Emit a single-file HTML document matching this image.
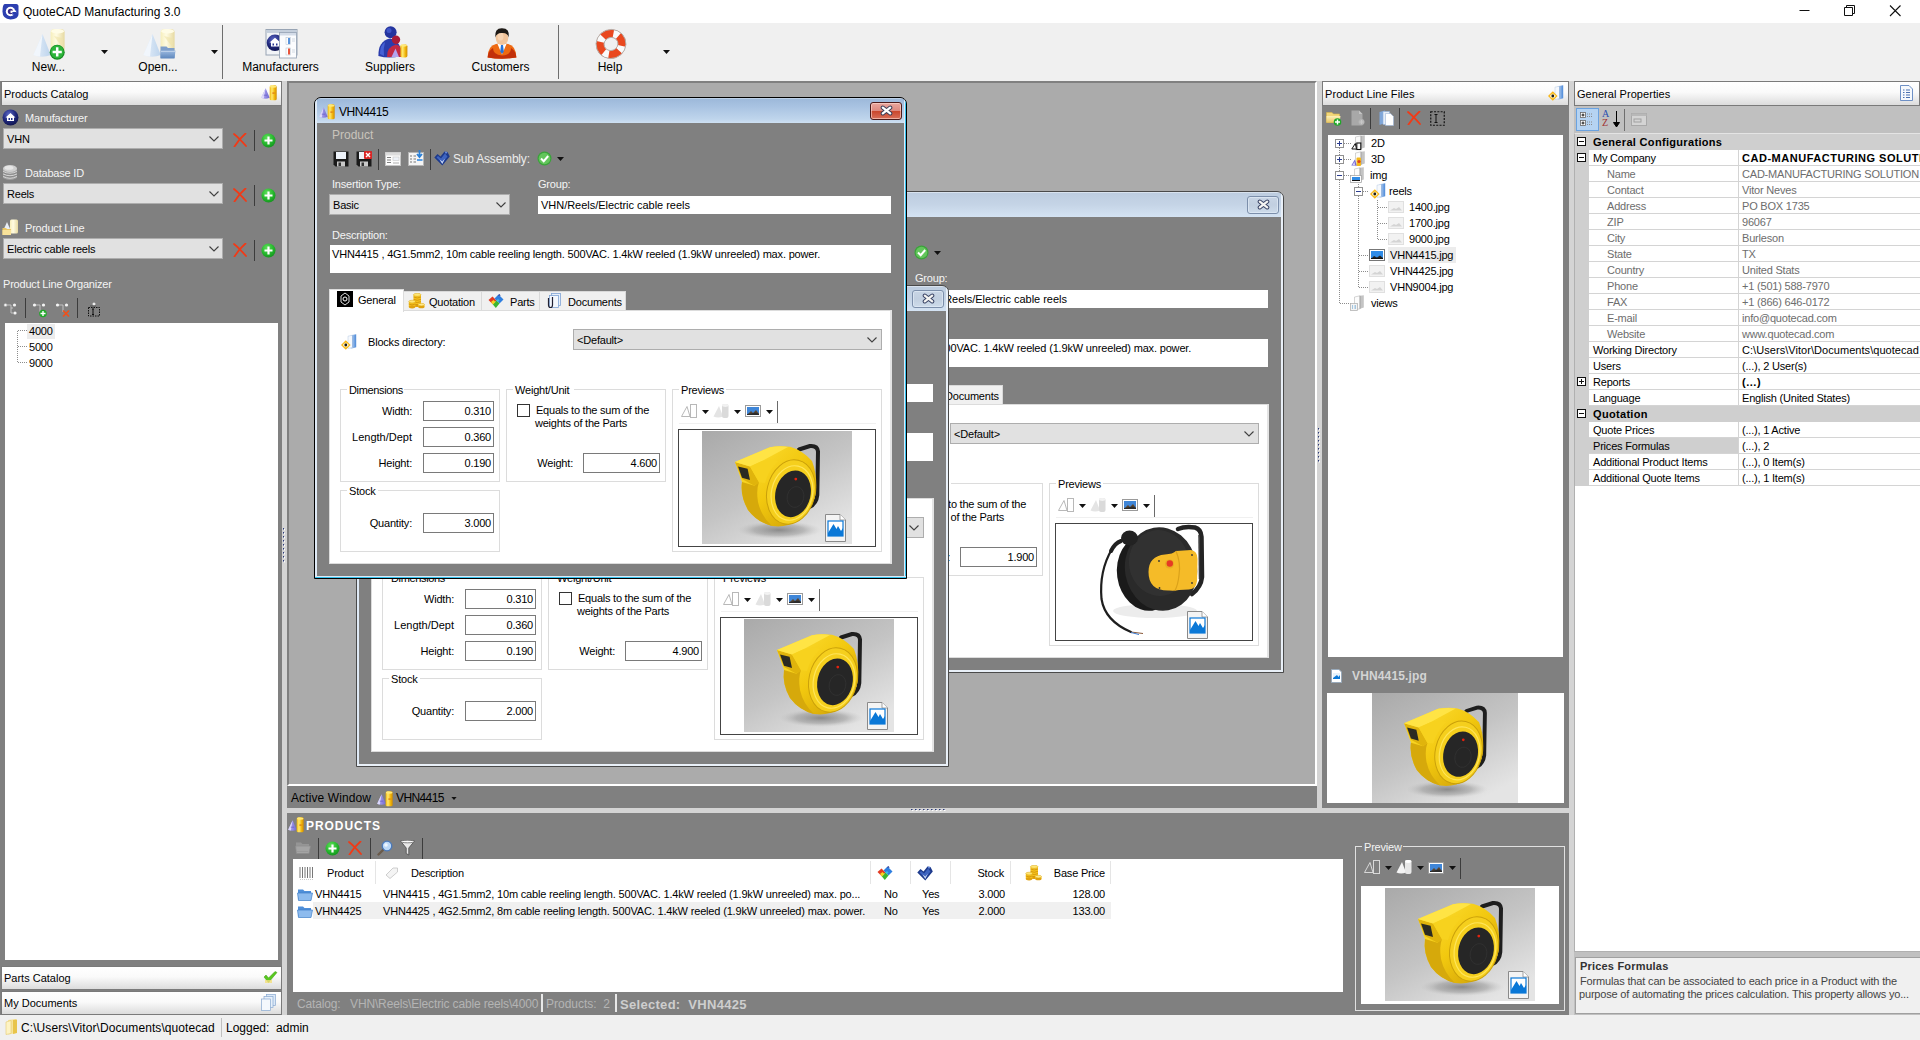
<!DOCTYPE html>
<html><head><meta charset="utf-8"><title>QuoteCAD Manufacturing 3.0</title>
<style>
html,body{margin:0;padding:0;}
body{width:1920px;height:1040px;overflow:hidden;position:relative;background:#f0f0f0;font-family:"Liberation Sans",sans-serif;font-size:11px;}
div,svg{position:absolute;box-sizing:border-box;}
.t{white-space:pre;}
.hdr{background:linear-gradient(#ffffff,#fafafa 45%,#dcdcdc);border:1px solid #7a7a7a;}
.combo{background:#e1e1e1;border:1px solid #adadad;}
.inp{background:#fff;border:1px solid #7a7a7a;}
.grp{border:1px solid #dcdcdc;}
.win{overflow:hidden;}
</style></head><body>
<svg width="0" height="0" style="left:0;top:0"><defs>
<linearGradient id="gbg" x1="0" y1="0" x2="0.7" y2="1"><stop offset="0" stop-color="#a9a9a9"/><stop offset="0.55" stop-color="#c4c4c4"/><stop offset="1" stop-color="#e4e4e4"/></linearGradient>
<radialGradient id="gsh" cx="0.5" cy="0.5" r="0.5"><stop offset="0" stop-color="#707070" stop-opacity="0.75"/><stop offset="0.6" stop-color="#8a8a8a" stop-opacity="0.45"/><stop offset="1" stop-color="#bbbbbb" stop-opacity="0"/></radialGradient>
<linearGradient id="gyel" x1="0" y1="0" x2="1" y2="1"><stop offset="0" stop-color="#ffe23a"/><stop offset="0.5" stop-color="#f2c80f"/><stop offset="1" stop-color="#c99a06"/></linearGradient>
<linearGradient id="gyel2" x1="0" y1="0" x2="0" y2="1"><stop offset="0" stop-color="#ffd91c"/><stop offset="1" stop-color="#d9a908"/></linearGradient>
<linearGradient id="ggold" x1="0" y1="0" x2="1" y2="0"><stop offset="0" stop-color="#efb408"/><stop offset="0.32" stop-color="#ffe970"/><stop offset="0.7" stop-color="#f0b40a"/><stop offset="1" stop-color="#d08c04"/></linearGradient>
<linearGradient id="gcone" x1="0" y1="0" x2="1" y2="0"><stop offset="0" stop-color="#b9b2f2"/><stop offset="1" stop-color="#7068d4"/></linearGradient>
<radialGradient id="ggreen" cx="0.4" cy="0.3" r="0.8"><stop offset="0" stop-color="#5fe05a"/><stop offset="0.6" stop-color="#22b32a"/><stop offset="1" stop-color="#138a1c"/></radialGradient>
<linearGradient id="gpcyl" x1="0" y1="0" x2="1" y2="0"><stop offset="0" stop-color="#f6eebb"/><stop offset="0.4" stop-color="#fffbe2"/><stop offset="1" stop-color="#e6d9a0"/></linearGradient>
<linearGradient id="gpcone" x1="0" y1="0" x2="1" y2="0"><stop offset="0" stop-color="#e7f0fa"/><stop offset="1" stop-color="#bcd3ec"/></linearGradient>
<linearGradient id="gfold" x1="0" y1="0" x2="0" y2="1"><stop offset="0" stop-color="#9dbbe0"/><stop offset="1" stop-color="#5c86bd"/></linearGradient>
<linearGradient id="gclose" x1="0" y1="0" x2="0" y2="1"><stop offset="0" stop-color="#eaa79f"/><stop offset="0.48" stop-color="#dd8a80"/><stop offset="0.5" stop-color="#c9452b"/><stop offset="1" stop-color="#d9705a"/></linearGradient>
<linearGradient id="gclose2" x1="0" y1="0" x2="0" y2="1"><stop offset="0" stop-color="#dfe8f3"/><stop offset="0.48" stop-color="#cfdcec"/><stop offset="0.5" stop-color="#b9cbe2"/><stop offset="1" stop-color="#c9d8ea"/></linearGradient>
<radialGradient id="gblue" cx="0.4" cy="0.3" r="0.8"><stop offset="0" stop-color="#5a66c4"/><stop offset="0.55" stop-color="#1e2678"/><stop offset="1" stop-color="#0e1244"/></radialGradient>
<linearGradient id="gfolderg" x1="0" y1="0" x2="0" y2="1"><stop offset="0" stop-color="#fdf1b8"/><stop offset="1" stop-color="#e9c766"/></linearGradient>
<linearGradient id="gbfold" x1="0" y1="0" x2="1" y2="0"><stop offset="0" stop-color="#cfe0f5"/><stop offset="1" stop-color="#4a88d8"/></linearGradient>
</defs><symbol id="reel" viewBox="0 0 150 113">
<rect width="150" height="113" fill="url(#gbg)"/>
<ellipse cx="77" cy="99" rx="42" ry="9" fill="url(#gsh)"/>
<path d="M97 18.500 L108 15 Q115.500 14.500 116 20.500 L115.300 64 Q114.500 72.500 107.500 76" fill="none" stroke="#1e1e1e" stroke-width="4" stroke-linecap="round" stroke-linejoin="round"/>
<path d="M33 31 L68 16.200 Q78 14.500 88 15.800 Q100 19 110 30 Q115.500 44 114 62 Q110 79 96 90 Q84 97 70 95 Q55 91 46 79 Q38 65 40 51 Z" fill="url(#gyel)"/>
<path d="M40 51 Q38 65 46 79 Q55 91 70 95 Q59 85 56 71 Q54 59 57 51 L52.500 54.700 Z" fill="#d6a90b"/>
<path d="M33 31 L48 35.400 L57 51.300 L52.400 54.700 L40 48 Z" fill="#e0b40c"/>
<path d="M36 35.400 L45.600 37.700 L48 49 L40 46.700 Z" fill="#2a2a22"/>
<path d="M33 31 L68 16.200 Q78 14.500 86 16 L60 30 L48 35.400 Z" fill="#ffe445"/>
<path d="M48 35.400 L60 30 Q70 27 76 30 Q66 40 63 52 L57 51.300 Z" fill="#f7d21e"/>
<ellipse cx="89" cy="61" rx="24" ry="32.500" fill="#f5cf1d" stroke="#caa00a" stroke-width="1" transform="rotate(13 89 61)"/>
<ellipse cx="90" cy="62" rx="20.500" ry="27.500" fill="none" stroke="#ffe55a" stroke-width="1.200" transform="rotate(13 90 62)"/>
<ellipse cx="91" cy="62.800" rx="17.600" ry="23.600" fill="#262626" transform="rotate(13 91 62.800)"/>
<ellipse cx="93.500" cy="66" rx="8.300" ry="10.500" fill="none" stroke="#303030" stroke-width="0.900" transform="rotate(13 93.500 66)"/>
<circle cx="93.800" cy="48.100" r="1.400" fill="#e3220f"/>
</symbol><symbol id="reel2" viewBox="0 0 198 118">
<ellipse cx="100" cy="88" rx="42" ry="7" fill="#ececec"/>
<path d="M123 6 Q130 3 140 4.500 Q146 6 146.500 14 L147 54 Q146 64 137 71" fill="none" stroke="#242424" stroke-width="4.500" stroke-linecap="round"/>
<path d="M144 12 L144.500 56" stroke="#3a3a3a" stroke-width="1.500"/>
<ellipse cx="92" cy="50" rx="30" ry="38" fill="#1a1a1a" transform="rotate(-8 92 50)"/>
<ellipse cx="106" cy="46" rx="36" ry="42" fill="#2a2a2a" transform="rotate(-10 106 46)"/>
<ellipse cx="104" cy="40" rx="30" ry="33" fill="#343434" opacity="0.700" transform="rotate(-10 104 40)"/>
<ellipse cx="74.500" cy="15" rx="8.500" ry="7.500" fill="#222"/>
<path d="M66 18 Q60 20 56 28" fill="none" stroke="#222" stroke-width="4" stroke-linecap="round"/>
<path d="M57 26 Q44 48 46.500 76 Q50 98 76 109" fill="none" stroke="#1e1e1e" stroke-width="2.200" stroke-linecap="round"/>
<path d="M76 109 L88 110.500" stroke="#8a5a3a" stroke-width="1"/><path d="M76 109.500 L84 111.500" stroke="#3a7ad0" stroke-width="1"/>
<path d="M93.500 49 Q93.500 33 110 31.500 Q118 31 121 28 L136 27 Q142.500 28 142.500 36 L142 58 Q141 66 134 66.500 L124 67 Q120 68 114 67.500 Q93.500 68 93.500 49 Z" fill="#f5bb28"/>
<path d="M121 28 Q126 40 124 52 Q123 62 120 67.500" fill="none" stroke="#dba21a" stroke-width="1.200"/>
<circle cx="114.500" cy="41" r="4.600" fill="#e8ae22"/><circle cx="114.800" cy="40.500" r="3.200" fill="#e63a24"/>
<circle cx="104" cy="38" r="0.900" fill="#333"/><circle cx="104.500" cy="65" r="0.900" fill="#333"/><circle cx="137" cy="32" r="0.900" fill="#333"/><circle cx="137" cy="60" r="0.900" fill="#333"/>
</symbol><symbol id="fileimg" viewBox="0 0 21 28">
<path d="M0.500 0.500 H15 L20.500 6 V27.500 H0.500 Z" fill="#f4f4f4" stroke="#8a8a8a"/>
<path d="M15 0.500 V6 H20.500" fill="#fff" stroke="#8a8a8a" stroke-width="0.8"/>
<rect x="3" y="7" width="15" height="15" fill="#0a78d7"/>
<path d="M4 20 L8.500 11 L11.500 16 L13.500 13 L17 20 Z" fill="#fff" opacity="0.0"/>
<path d="M4 21 L8 11 L10.500 15.500 L12.500 12.500 L16.500 21 Z" fill="#0a78d7"/>
<path d="M3 7 H18 V14 L16 17 L13 12 L11.500 15 L8.500 10 L3 19 Z" fill="#fff"/>
<rect x="3" y="7" width="15" height="15" fill="none" stroke="#0a78d7" stroke-width="1.2"/>
</symbol><symbol id="prod" viewBox="0 0 16 16">
<path d="M4.600 3.200 L8.700 12.800 Q4.500 14.800 0.200 12.800 Z" fill="url(#gcone)"/>
<path d="M4.600 3.200 L2.800 13.500 Q1.300 13.300 0.200 12.800 Z" fill="#dcd8fa"/>
<path d="M2.800 10.200 L6.200 10.200" stroke="#6a62c8" stroke-width="0.800"/>
<rect x="8.700" y="0.300" width="7" height="15" rx="1.600" fill="url(#ggold)"/>
<ellipse cx="12.200" cy="1.600" rx="3.300" ry="1.200" fill="#ffe878"/>
<path d="M11.500 7.200 L14.800 8 L11.500 9 Z" fill="#d9660a" opacity="0.850"/>
</symbol><symbol id="gplus" viewBox="0 0 15 15">
<circle cx="7.500" cy="7.500" r="7" fill="url(#ggreen)"/>
<path d="M7.500 3.500 V11.500 M3.500 7.500 H11.500" stroke="#fff" stroke-width="2.200"/>
</symbol><symbol id="redx" viewBox="0 0 14 14">
<path d="M1 1 Q6 5 13 13 M12.500 0.500 Q6 6 1.500 13.500" stroke="#f03a17" stroke-width="1.800" fill="none" stroke-linecap="round"/>
</symbol><symbol id="chev" viewBox="0 0 10 6"><path d="M0.500 0.500 L5 5 L9.500 0.500" stroke="#404040" stroke-width="1.100" fill="none"/></symbol><symbol id="darr" viewBox="0 0 7 4"><path d="M0 0 H7 L3.500 4 Z" fill="#111"/></symbol><symbol id="save" viewBox="0 0 16 16">
<path d="M0.500 0.500 H15.500 V15.500 H2.500 L0.500 13.500 Z" fill="#1a1a1a"/>
<rect x="3" y="1" width="10" height="7" fill="#eef3fa"/>
<rect x="4" y="10.500" width="8" height="5" fill="#c9c9c9"/><rect x="5.500" y="11.500" width="2.500" height="3.500" fill="#333"/>
</symbol><symbol id="savex" viewBox="0 0 16 16">
<path d="M0.500 0.500 H15.500 V15.500 H2.500 L0.500 13.500 Z" fill="#1a1a1a"/>
<rect x="3" y="1" width="10" height="7" fill="#eef3fa"/>
<rect x="4" y="10.500" width="8" height="5" fill="#c9c9c9"/><rect x="5.500" y="11.500" width="2.500" height="3.500" fill="#333"/>
<rect x="8" y="0" width="8" height="8" rx="1" fill="#d92626"/><path d="M10 2 L14 6 M14 2 L10 6" stroke="#fff" stroke-width="1.400"/>
</symbol><symbol id="form1" viewBox="0 0 16 14">
<rect x="0.500" y="0.500" width="15" height="13" fill="#fcfcfc" stroke="#c4c4c4"/>
<rect x="0.500" y="0.500" width="15" height="3" fill="#dcdcdc"/>
<path d="M2 5.500 H6 M2 8 H6 M2 10.500 H6" stroke="#808080" stroke-width="1.200"/>
<rect x="8" y="5" width="6" height="3.500" fill="#eef2f8" stroke="#c8c8c8" stroke-width="0.600"/><path d="M8 11 H14" stroke="#b0b0b0" stroke-width="1"/>
</symbol><symbol id="form2" viewBox="0 0 16 16">
<rect x="0.500" y="2.500" width="15" height="13" fill="#f4f4f4" stroke="#b5b5b5"/>
<path d="M2 6 H4 M2 9 H4 M2 12 H4 M5.500 6 H8 M5.500 9 H8 M5.500 12 H8" stroke="#777" stroke-width="1.200"/>
<path d="M11.500 0 V6 M9 4 L11.500 7 L14 4" stroke="#2a7fd6" stroke-width="1.800" fill="none"/>
<rect x="9" y="9" width="5.500" height="2" fill="#5aa0e6"/>
</symbol><symbol id="suba" viewBox="0 0 16 15">
<path d="M0.300 6.500 L3.500 3 L6.500 5.500 L10.500 0.500 L13.500 1 L15.800 5.500 L8.300 14.500 Z" fill="#1d3a8c"/>
<path d="M2.500 6.500 L4 5 L7 7.500 L11 2.500 L13.500 5.500 L8.300 12 Z" fill="#3e64c0"/>
<path d="M5.500 8.500 L8.300 10.500 L11 7.500 L8.300 13 Z" fill="#c9d8f4"/>
<path d="M10.500 0.500 L13.500 1 L12 3 Z" fill="#6a8ee0"/>
</symbol><symbol id="parts" viewBox="0 0 16 15">
<path d="M0.500 6 L4.500 2.500 L8.500 6.500 L4.500 10 Z" fill="#e23a22"/>
<path d="M6.500 4.500 L10.500 0.500 L15.500 5.500 L11.500 9.500 Z" fill="#2f7fe0"/>
<path d="M9.800 1.200 L11.800 0 L12.500 2 Z" fill="#2a3a9a"/>
<path d="M4.500 10 L8.500 6.500 L11.500 9.500 L7.800 14 Z" fill="#3cb432"/>
<path d="M3 8 L5.500 6 L7.500 8 L5 10.500 Z" fill="#f5d422"/>
<path d="M8.500 6.500 L10 5 L11.500 6.500 L10 8 Z" fill="#36c0e8"/>
</symbol><symbol id="gcheck" viewBox="0 0 15 15">
<circle cx="7.500" cy="7.500" r="7" fill="#3aa33a"/><circle cx="7.500" cy="7.500" r="5.800" fill="#63c55c"/>
<path d="M4 7.500 L6.700 10.200 L11.200 5" stroke="#fff" stroke-width="2" fill="none"/>
</symbol><symbol id="coins" viewBox="0 0 17 16">
<rect x="5.500" y="1.500" width="7.500" height="11" fill="#f6c21c"/>
<ellipse cx="9.250" cy="12.500" rx="3.750" ry="1.500" fill="#e0a210"/>
<path d="M5.500 4 Q9.250 6 13 4 M5.500 6.300 Q9.250 8.300 13 6.300 M5.500 8.600 Q9.250 10.600 13 8.600 M5.500 10.900 Q9.250 12.900 13 10.900" stroke="#c88a08" stroke-width="0.700" fill="none"/>
<ellipse cx="9.250" cy="1.800" rx="3.750" ry="1.500" fill="#ffe674" stroke="#d9a514" stroke-width="0.500"/>
<rect x="0.800" y="8.500" width="6.500" height="5.500" fill="#f6c21c"/>
<ellipse cx="4.050" cy="14" rx="3.250" ry="1.400" fill="#e0a210"/>
<path d="M0.800 11 Q4 12.800 7.300 11" stroke="#c88a08" stroke-width="0.700" fill="none"/>
<ellipse cx="4.050" cy="8.600" rx="3.250" ry="1.400" fill="#ffe674" stroke="#d9a514" stroke-width="0.500"/>
<rect x="10.200" y="11.500" width="6.300" height="2.500" fill="#f6c21c"/>
<ellipse cx="13.350" cy="14" rx="3.150" ry="1.300" fill="#e0a210"/>
<ellipse cx="13.350" cy="11.600" rx="3.150" ry="1.300" fill="#ffe98a" stroke="#d9a514" stroke-width="0.500"/>
</symbol><symbol id="gen" viewBox="0 0 16 16">
<rect width="16" height="16" fill="#000"/>
<path d="M8 2 L12 5 V11 L8 14 L4 11 V5 Z" fill="none" stroke="#ddd" stroke-width="1"/>
<circle cx="8" cy="8" r="2" fill="none" stroke="#fff" stroke-width="1"/>
</symbol><symbol id="docs" viewBox="0 0 16 16">
<rect x="5.500" y="0.500" width="9" height="12" fill="#e7f0fb" stroke="#7fa4d4" stroke-width="0.800"/>
<rect x="3.500" y="2.500" width="9" height="12" fill="#f4f8fd" stroke="#7fa4d4" stroke-width="0.800"/>
<path d="M2.500 5 V12 Q2.500 14.500 4.500 14.500 Q6.500 14.500 6.500 12 V4" fill="none" stroke="#223" stroke-width="1.200"/>
</symbol><symbol id="bdir" viewBox="0 0 16 16">
<path d="M9.500 1.200 L15.200 0.200 V13.200 L9.500 15 Z" fill="url(#gbfold)"/>
<path d="M7 2.200 L11.500 1.200 V13.500 L7 14.500 Z" fill="#f6f9fd" stroke="#b4c8e2" stroke-width="0.500"/>
<path d="M11.500 1.200 V13.500" stroke="#7fa8dc" stroke-width="0.600"/>
<path d="M0 11 L4.800 6.300 L9.600 11 L4.800 15.700 Z" fill="#f9b616"/>
<path d="M1.500 11 L4.800 7.800 L8.100 11 L4.800 14.200 Z" fill="#ffd24a"/>
<ellipse cx="4.800" cy="11" rx="2.700" ry="1.800" fill="#fff8d8"/><circle cx="4.800" cy="11" r="1.400" fill="#1a1a1a"/>
</symbol><symbol id="p2d" viewBox="0 0 17 16">
<path d="M0.500 13.500 L6 3.500 L9 13.500 Z" fill="#fff" stroke="#b8b8b8"/>
<rect x="9.500" y="1.500" width="6" height="13" fill="#fff" stroke="#b8b8b8"/>
</symbol><symbol id="p3d" viewBox="0 0 17 16">
<path d="M0.500 13.500 L6 3 L10 13.500 Q5 15.500 0.500 13.500 Z" fill="#e4e4e4"/>
<rect x="9" y="1" width="6.500" height="14" rx="2" fill="#dadada"/>
<ellipse cx="12.250" cy="2.500" rx="3.200" ry="1.400" fill="#f2f2f2"/>
</symbol><symbol id="p3dw" viewBox="0 0 17 16">
<path d="M0.500 13.500 L6 3 L10 13.500 Q5 15.500 0.500 13.500 Z" fill="#f4f4f4"/>
<rect x="9" y="1" width="6.500" height="14" rx="2" fill="#e8e8e8"/>
<ellipse cx="12.250" cy="2.500" rx="3.200" ry="1.400" fill="#fff"/>
</symbol><symbol id="p2dw" viewBox="0 0 17 16">
<path d="M0.500 13.500 L6 3.500 L9 13.500 Z" fill="none" stroke="#d8d8d8"/>
<rect x="9.500" y="1.500" width="6" height="13" fill="none" stroke="#d8d8d8"/>
</symbol><symbol id="pimg" viewBox="0 0 16 12">
<rect x="0.500" y="0.500" width="15" height="11" fill="#fff" stroke="#9a9a9a"/>
<rect x="2" y="2" width="12" height="8" fill="#3f86d8"/>
<path d="M2 10 L6 6 L8 8 L11 5 L14 9 V10 Z" fill="#5a4632"/>
<path d="M2 10 H14 V9 L11 7.500 L6 8.500 L2 9 Z" fill="#2b2b2b"/>
</symbol><symbol id="thumb" viewBox="0 0 16 12">
<rect x="0.500" y="0.500" width="15" height="11" fill="#f2f2f2" stroke="#e0e0e0"/>
<path d="M2 9.500 L6 7 L8 8 L11 6 L14 9.500 Z" fill="#d4d4d4"/>
</symbol><symbol id="thumbc" viewBox="0 0 16 12">
<rect x="0.500" y="0.500" width="15" height="11" fill="#fff" stroke="#777"/>
<rect x="2" y="2" width="12" height="8" fill="#2f8be6"/>
<path d="M2 10 L5 7 L8 8.500 L11 6.500 L14 9 V10 Z" fill="#222"/>
<rect x="2" y="9" width="12" height="1" fill="#111"/>
</symbol><symbol id="fileblue" viewBox="0 0 11 14">
<path d="M0.500 0.500 H8 L10.500 3 V13.500 H0.500 Z" fill="#fff" stroke="#9ab"/>
<rect x="2" y="4" width="7" height="6" fill="#0a78d7"/>
<path d="M2 4 H9 V6 L7.500 8 L6 6 L2 9 Z" fill="#fff" opacity="0.900"/>
</symbol><symbol id="bfolder" viewBox="0 0 16 13">
<path d="M1 1.500 H6 L7.500 3 H14 V11.500 H1 Z" fill="#4f8fd9"/>
<path d="M0.500 5 H15.500 L14 12.500 H1.500 Z" fill="#8dbbee" stroke="#3f7fc9" stroke-width="0.700"/>
</symbol><symbol id="gfolder" viewBox="0 0 16 13">
<path d="M1 1.500 H6 L7.500 3 H14 V11.500 H1 Z" fill="#959595"/>
<path d="M0.500 5 H15.500 L14 12.500 H1.500 Z" fill="#a4a4a4" stroke="#8c8c8c" stroke-width="0.700"/><path d="M2.500 10.500 H13" stroke="#8c8c8c" stroke-width="0.800" stroke-dasharray="1 1"/>
</symbol><symbol id="mag" viewBox="0 0 16 16">
<path d="M1.500 14.500 L7 9" stroke="#6a5a4a" stroke-width="2.400" stroke-linecap="round"/>
<circle cx="10" cy="6" r="4.800" fill="#bcd9f7" stroke="#4a78b8" stroke-width="1.300"/>
<circle cx="9" cy="5" r="1.800" fill="#eef6ff"/>
</symbol><symbol id="funnel" viewBox="0 0 15 16">
<path d="M0.500 1 H14.500 L8.800 8 V15 L6.200 13.500 V8 Z" fill="#e8e8e8" stroke="#555" stroke-width="0.900"/>
<ellipse cx="7.500" cy="1.500" rx="7" ry="1.300" fill="#fafafa" stroke="#555" stroke-width="0.700"/>
</symbol><symbol id="barcode" viewBox="0 0 16 14"><path d="M1 1 V12 M3.500 1 V12 M6 1 V12 M8.500 1 V12 M11 1 V12 M13.500 1 V12" stroke="#777" stroke-width="1"/><path d="M1 13.500 H14" stroke="#aaa" stroke-width="0.600" stroke-dasharray="1 1"/></symbol><symbol id="tag" viewBox="0 0 14 12"><path d="M1 8 L8 1 H12.500 V5 L5 11.500 Z" fill="#f4f4f4" stroke="#c8c8c8" stroke-width="0.900"/></symbol><symbol id="org1" viewBox="0 0 16 14">
<circle cx="2.500" cy="3" r="1.600" fill="#f4f4f4" stroke="#9a9a9a" stroke-width="0.500"/>
<path d="M4 3 H8 V11 H10 M8 6 H10" stroke="#c8c8c8" stroke-width="0.900" fill="none"/>
<circle cx="11.500" cy="3" r="1.600" fill="#f4f4f4"/><circle cx="12" cy="11" r="1.600" fill="#f4f4f4"/>
</symbol><symbol id="org2" viewBox="0 0 16 16">
<circle cx="2.500" cy="3" r="1.600" fill="#f4f4f4"/>
<path d="M4 3 H8 V10" stroke="#c8c8c8" stroke-width="0.900" fill="none"/>
<circle cx="11.500" cy="3" r="1.600" fill="#f4f4f4"/>
<circle cx="11" cy="11.500" r="3.800" fill="#22a82a"/><path d="M11 9 V14 M8.500 11.500 H13.500" stroke="#fff" stroke-width="1.400"/>
</symbol><symbol id="org3" viewBox="0 0 16 16">
<circle cx="2.500" cy="3" r="1.600" fill="#f4f4f4"/>
<path d="M4 3 H8 V10" stroke="#c8c8c8" stroke-width="0.900" fill="none"/>
<circle cx="11.500" cy="3" r="1.600" fill="#f4f4f4"/>
<path d="M8 8.500 L14 14.500 M14 8.500 L8 14.500" stroke="#f0501a" stroke-width="1.700"/>
</symbol><symbol id="org4" viewBox="0 0 14 15">
<circle cx="7" cy="2" r="1.500" fill="#eee"/><path d="M3 4 H9" stroke="#444" stroke-width="0.800"/>
<rect x="1.500" y="5.500" width="11" height="8.500" fill="none" stroke="#111" stroke-width="1" stroke-dasharray="1.500 1"/>
<path d="M5 7 H7 M6 7 V12.500 M5 12.500 H7" stroke="#111" stroke-width="1"/>
</symbol><symbol id="dashrect" viewBox="0 0 15 15">
<rect x="0.750" y="0.750" width="13.500" height="13.500" fill="none" stroke="#111" stroke-width="1.200" stroke-dasharray="2 1.300"/>
<path d="M4.500 3.500 H7.500 M6 3.500 V11.500 M4.500 11.500 H7.500" stroke="#111" stroke-width="1"/>
</symbol><symbol id="foldplus" viewBox="0 0 16 15">
<path d="M0.500 1.500 H6 L7.500 3 H13.500 V11.500 H0.500 Z" fill="#f2d77a" stroke="#d9b648" stroke-width="0.600"/>
<path d="M0.500 5 H14.500 L13.500 11.500 H0.500 Z" fill="url(#gfolderg)"/>
<circle cx="11.500" cy="11" r="3.800" fill="#22a82a"/><path d="M11.500 8.500 V13.500 M9 11 H14" stroke="#fff" stroke-width="1.400"/>
</symbol><symbol id="graydoc" viewBox="0 0 14 16">
<path d="M0.500 0.500 H8 L11.500 4 V15.500 H0.500 Z" fill="#a8a8a8"/><path d="M8 0.500 V4 H11.500 Z" fill="#c4c4c4"/>
<circle cx="10.500" cy="12" r="3" fill="#b4b4b4"/><path d="M10.500 10 V14 M8.500 12 H12.500" stroke="#c8c8c8" stroke-width="1.200"/>
</symbol><symbol id="copyic" viewBox="0 0 15 16">
<path d="M0.500 2 L6 0.500 V13 L0.500 15 Z" fill="#7fa6d9"/>
<path d="M4 1.500 H10.500 V14.500 H4 Z" fill="#e6eef8" stroke="#8fb0dc" stroke-width="0.600"/>
<path d="M6.500 3.500 H11.500 L14.500 6.500 V15.500 H6.500 Z" fill="#fff" stroke="#9ab4d6" stroke-width="0.600"/>
</symbol><symbol id="fold2d" viewBox="0 0 16 16">
<path d="M10 0.800 L13.800 0.300 V12.600 L10 13.800 Z" fill="#c4c4c4"/><path d="M4.500 2 L10 0.800 V13.800 L4.500 14.800 Z" fill="#fcfcfc" stroke="#b8b8b8" stroke-width="0.600"/><path d="M10 0.800 V13.800" stroke="#9a9a9a" stroke-width="0.700"/>
<path d="M0.800 14 L4.300 8.500 L5.500 14 Z" fill="#fff" stroke="#111" stroke-width="1"/><rect x="5.800" y="8" width="4" height="6.500" fill="#fff" stroke="#111" stroke-width="1.100"/>
</symbol><symbol id="fold3d" viewBox="0 0 16 16">
<path d="M10 0.800 L13.800 0.300 V12.600 L10 13.800 Z" fill="#c4c4c4"/><path d="M4.500 2 L10 0.800 V13.800 L4.500 14.800 Z" fill="#fcfcfc" stroke="#b8b8b8" stroke-width="0.600"/><path d="M10 0.800 V13.800" stroke="#9a9a9a" stroke-width="0.700"/>
<path d="M0.300 14.500 L3.800 8.500 L6 14.500 Z" fill="#7468d8"/><path d="M1.500 14 L3.500 10.500 L4 14 Z" fill="#d8d4f8"/><rect x="5.500" y="6.500" width="4.500" height="8.500" rx="1" fill="#f3b81a"/><circle cx="8" cy="10.500" r="1.600" fill="#e0401a"/>
</symbol><symbol id="foldimg" viewBox="0 0 16 16">
<path d="M10 0.800 L13.800 0.300 V12.600 L10 13.800 Z" fill="#c4c4c4"/><path d="M4.500 2 L10 0.800 V13.800 L4.500 14.800 Z" fill="#fcfcfc" stroke="#b8b8b8" stroke-width="0.600"/><path d="M10 0.800 V13.800" stroke="#9a9a9a" stroke-width="0.700"/>
<rect x="0.500" y="8.500" width="11" height="7" fill="#fff" stroke="#999" stroke-width="0.700"/><rect x="2" y="10" width="8" height="4" fill="#2f8be6"/><rect x="2" y="13" width="8" height="1" fill="#111"/>
</symbol><symbol id="foldviews" viewBox="0 0 16 16">
<path d="M10 0.800 L13.800 0.300 V12.600 L10 13.800 Z" fill="#c4c4c4"/><path d="M4.500 2 L10 0.800 V13.800 L4.500 14.800 Z" fill="#fcfcfc" stroke="#b8b8b8" stroke-width="0.600"/><path d="M10 0.800 V13.800" stroke="#9a9a9a" stroke-width="0.700"/>
<rect x="0.500" y="8.500" width="7" height="7" fill="#f4f4f4" stroke="#aaa" stroke-width="0.700"/><path d="M2 11 H3 M4.500 11 H6 M2 13 H3 M4.500 13 H6" stroke="#59c" stroke-width="1"/>
</symbol><symbol id="plusbox" viewBox="0 0 9 9"><rect x="0.500" y="0.500" width="8" height="8" fill="#fff" stroke="#919191"/><path d="M2 4.500 H7 M4.500 2 V7" stroke="#2b3d8f" stroke-width="1"/></symbol><symbol id="minusbox" viewBox="0 0 9 9"><rect x="0.500" y="0.500" width="8" height="8" fill="#fff" stroke="#919191"/><path d="M2 4.500 H7" stroke="#2b3d8f" stroke-width="1"/></symbol><symbol id="pgminus" viewBox="0 0 9 9"><rect x="0.500" y="0.500" width="8" height="8" fill="#fff" stroke="#111"/><path d="M2 4.500 H7" stroke="#111" stroke-width="1"/></symbol><symbol id="pgplus" viewBox="0 0 9 9"><rect x="0.500" y="0.500" width="8" height="8" fill="#fff" stroke="#111"/><path d="M2 4.500 H7 M4.500 2 V7" stroke="#111" stroke-width="1"/></symbol><symbol id="manu" viewBox="0 0 17 17">
<circle cx="8.500" cy="8.500" r="8" fill="url(#gblue)"/>
<path d="M3.500 8.500 L8.500 4 L13.500 8.500 H12 V12 H5 V8.500 Z" fill="#fff"/><rect x="6.500" y="9" width="1.500" height="2" fill="#27348f"/><rect x="9" y="9" width="1.500" height="2" fill="#27348f"/>
</symbol><symbol id="dbic" viewBox="0 0 16 17">
<ellipse cx="8" cy="13" rx="7" ry="3" fill="#9c9c9c"/><rect x="1" y="4.500" width="14" height="8.500" fill="#a8a8a8"/>
<path d="M1 7.500 Q8 11 15 7.500 M1 10 Q8 13.500 15 10 M1 12.500 Q8 16 15 12.500" stroke="#d4d4d4" stroke-width="1" fill="none"/>
<path d="M1 8.600 Q8 12.100 15 8.600 M1 11.100 Q8 14.600 15 11.100" stroke="#808080" stroke-width="0.800" fill="none"/>
<ellipse cx="8" cy="4.500" rx="7" ry="3.500" fill="#cfcfcf"/><ellipse cx="7" cy="3.800" rx="4.500" ry="2" fill="#e6e6e6"/>
</symbol><symbol id="plic" viewBox="0 0 17 17">
<path d="M5 3 L9 12 H1 Z" fill="#e8eef6"/><rect x="8" y="0.500" width="8" height="14" rx="1.500" fill="url(#gpcyl)"/>
<path d="M0.500 9 H4 L5 10 H9 V16 H0.500 Z" fill="#e9c766"/><path d="M0.500 11 H9 V16 H0.500 Z" fill="#f8e29a"/>
</symbol><symbol id="pcheck" viewBox="0 0 15 13"><path d="M1 6 L5.500 11.500 L14 1.500 L12 0.500 L5.500 7 L3 4 Z" fill="#58c81e" stroke="#3a9a10" stroke-width="0.500"/><path d="M2 9 H9 V12 H2 Z" fill="#f4e07a" opacity="0.800"/></symbol><symbol id="mydocs" viewBox="0 0 16 17">
<rect x="5.500" y="0.500" width="9" height="11" fill="#dbe8f7" stroke="#88a8d0" stroke-width="0.700"/>
<rect x="3" y="2.500" width="9" height="11" fill="#e7f0fa" stroke="#88a8d0" stroke-width="0.700"/>
<rect x="0.500" y="5" width="9" height="11.500" fill="#f4f8fd" stroke="#88a8d0" stroke-width="0.700"/>
</symbol><symbol id="gpdoc" viewBox="0 0 13 16">
<path d="M0.500 0.500 H9 L12.500 4 V15.500 H0.500 Z" fill="#f6f9fd" stroke="#5f84c0" stroke-width="0.900"/>
<path d="M3 5 H4.500 M6 5 H10 M3 7.500 H4.500 M6 7.500 H10 M3 10 H4.500 M6 10 H10 M3 12.500 H4.500 M6 12.500 H10" stroke="#4a70b0" stroke-width="1"/>
</symbol><symbol id="stfolder" viewBox="0 0 13 16">
<path d="M3 1 L11 0 V14 L3 15.500 Z" fill="#f6e39a"/><path d="M1 3 L6 1.500 V14.500 L1 15.500 Z" fill="#fdf3c4" stroke="#e0c35a" stroke-width="0.500"/><path d="M8 1 L12 0.500 V14 L8 15 Z" fill="#e8c44a"/>
</symbol><symbol id="tbnew" viewBox="0 0 34 32">
<path d="M10.500 6 L18.800 27 Q10 30.500 1.400 27 Z" fill="url(#gpcone)"/>
<path d="M10.500 6 L8 28.600 Q4 28.200 1.400 27 Z" fill="#f1f6fc"/>
<rect x="18.600" y="1" width="14" height="24" rx="3.500" fill="url(#gpcyl)"/><ellipse cx="25.600" cy="3.200" rx="6.500" ry="2.200" fill="#fffce6"/>
<path d="M22 8 Q26 14 30 18 V10 Z" fill="#efe2a8" opacity="0.600"/>
<circle cx="25.200" cy="24.200" r="7.500" fill="#178a22"/><circle cx="25.200" cy="23.800" r="6.600" fill="#2db53a"/>
<path d="M25.200 19.300 V28.500 M20.600 23.900 H29.800" stroke="#fff" stroke-width="2.500"/>
</symbol><symbol id="tbopen" viewBox="0 0 34 32">
<path d="M10.500 6 L18.800 27 Q10 30.500 1.400 27 Z" fill="url(#gpcone)"/>
<path d="M10.500 6 L8 28.600 Q4 28.200 1.400 27 Z" fill="#f1f6fc"/>
<rect x="18.600" y="1" width="14" height="24" rx="3.500" fill="url(#gpcyl)"/><ellipse cx="25.600" cy="3.200" rx="6.500" ry="2.200" fill="#fffce6"/>
<path d="M22 8 Q26 14 30 18 V10 Z" fill="#efe2a8" opacity="0.600"/>
<path d="M18.500 18.500 H24.500 L26 20 H32.500 V30 H18.500 Z" fill="#7f9fca"/><path d="M18.500 22.500 H33.500 L32.500 30.500 H18.500 Z" fill="url(#gfold)"/>
<path d="M19 23.500 H33" stroke="#c4d6ec" stroke-width="0.800"/>
</symbol><symbol id="tbmanu" viewBox="0 0 34 32">
<rect x="1" y="2.500" width="31" height="25.500" fill="#f2f4f7" stroke="#98a4b4" stroke-width="1"/><rect x="1.500" y="3" width="30" height="3" fill="#c5cfdc"/>
<circle cx="10" cy="15.800" r="8.300" fill="url(#gblue)"/>
<path d="M4.500 15.500 L10 10.800 L15.500 15.500 H14 V19.500 H6 V15.500 Z" fill="#fff"/><path d="M7.500 16.500 H9 V18.500 H7.500 Z M11 16.500 H12.500 V18.500 H11 Z" fill="#27348f"/>
<rect x="14.500" y="5.500" width="17" height="25.500" fill="#fbfcfe" stroke="#9aa6b8" stroke-width="0.900"/><rect x="15" y="6" width="16" height="2.500" fill="#d4dce8"/>
<rect x="21" y="10.500" width="4.500" height="7" fill="#fff" stroke="#b0bccc" stroke-width="0.500"/><rect x="23" y="11" width="2" height="6" fill="#5a94dc"/>
<rect x="21" y="21" width="4.500" height="7" fill="#fff" stroke="#b0bccc" stroke-width="0.500"/><rect x="23" y="21.500" width="2" height="6" fill="#e8543c"/>
<path d="M27 12 H30 M27 14 H30 M27 23 H30 M27 25 H30" stroke="#c8d0dc" stroke-width="0.800"/>
</symbol><symbol id="tbsupp" viewBox="0 0 34 34">
<circle cx="15.600" cy="7.300" r="6" fill="#24349e"/><circle cx="14" cy="5.500" r="2.500" fill="#4a62d8" opacity="0.700"/>
<path d="M3.400 31 Q3 16 15 13.500 Q27 16 26 31 Q14 34 3.400 31 Z" fill="#2a3cac"/>
<path d="M5 29 Q5 20 10 17 Q8 24 9 31 Z" fill="#4f6ae0" opacity="0.800"/>
<circle cx="21" cy="14.800" r="4.200" fill="#a81c38"/>
<path d="M12 32 Q11.500 22 21 19.500 Q28 21 27.500 32 Z" fill="#c22a44"/>
<path d="M16.500 32 L20.500 23.500 L24 32 Z" fill="#b4a4ee"/>
<rect x="25.400" y="19.500" width="7" height="13" rx="1.800" fill="url(#ggold)"/><ellipse cx="28.900" cy="20.600" rx="3.200" ry="1.100" fill="#ffe878"/>
</symbol><symbol id="tbcust" viewBox="0 0 34 32">
<path d="M2.600 30.500 Q2.600 19 11 17 L17 16 L23 17 Q31.400 19 31.400 30.500 Q17 33 2.600 30.500 Z" fill="#ee6a12"/>
<path d="M2.600 30.500 Q3 24 8 21 Q8 28 17 28.500 Q26 28 26 21 Q31 24 31.400 30.500 Q17 33 2.600 30.500 Z" fill="#c2300a"/>
<path d="M12.500 17 L17 27.500 L21.500 17 Z" fill="#fff"/><path d="M16 18 H18 L18.800 24.500 L17 27 L15.200 24.500 Z" fill="#2a72d4"/>
<ellipse cx="17" cy="10.800" rx="6.300" ry="7.300" fill="#f2c49a"/><ellipse cx="15.500" cy="9.500" rx="3" ry="4" fill="#fbdcbc" opacity="0.700"/>
<path d="M10.200 10.500 Q9.500 1 17 1.200 Q25 1.200 23.800 10.500 Q22.500 5.500 17 6 Q12 5.500 10.200 10.500 Z" fill="#1e1a16"/>
</symbol><symbol id="tbhelp" viewBox="0 0 34 34">
<g transform="rotate(-20 17 17)">
<ellipse cx="17" cy="17" rx="11" ry="10.500" fill="none" stroke="#e9481f" stroke-width="8"/>
<ellipse cx="17" cy="17" rx="11" ry="10.500" fill="none" stroke="#fafafa" stroke-width="8" stroke-dasharray="5.500 11.400" stroke-dashoffset="-5.700"/>
<ellipse cx="17" cy="17" rx="15" ry="14.500" fill="none" stroke="#b4b0ac" stroke-width="0.900"/><ellipse cx="17" cy="17" rx="7" ry="6.500" fill="none" stroke="#b4b0ac" stroke-width="0.900"/>
</g>
</symbol><symbol id="appic" viewBox="0 0 18 18">
<path d="M3 1 H15 Q17.500 1 17.500 4 V12 Q17.500 17 9 17.500 Q0.500 17 0.500 9 Q0.500 1 3 1 Z" fill="#2c3fb0"/>
<circle cx="9" cy="9" r="5" fill="#fff"/><circle cx="9" cy="9" r="2.800" fill="#3a2a8a"/><rect x="9" y="8" width="6" height="2.500" fill="#fff"/><rect x="11" y="9.500" width="4" height="3" fill="#2c3fb0"/>
</symbol><symbol id="pgcat" viewBox="0 0 16 16">
<rect x="1.500" y="1.500" width="5" height="5" fill="#fff" stroke="#666" stroke-width="0.800"/><path d="M2.500 4 H5.500 M4 2.500 V5.500" stroke="#000" stroke-width="0.900"/>
<rect x="1.500" y="9.500" width="5" height="5" fill="#fff" stroke="#666" stroke-width="0.800"/><path d="M2.500 12 H5.500 M4 10.500 V13.500" stroke="#000" stroke-width="0.900"/>
<path d="M8 3 H11 M8 5.500 H14 M8 11 H11 M8 13.500 H14 M12 3 H14 M12 11 H14" stroke="#8a8a8a" stroke-width="1" stroke-dasharray="1 1"/>
</symbol><symbol id="pgprop" viewBox="0 0 16 13"><rect x="0.500" y="0.500" width="15" height="12" fill="#d4d4d4" stroke="#a8a8a8"/><rect x="0.500" y="0.500" width="15" height="2.500" fill="#b8b8b8"/><rect x="3" y="6" width="7" height="3" fill="none" stroke="#a0a0a0"/></symbol></svg>
<div style="left:0px;top:0px;width:1920px;height:23px;background:#fff;"></div><svg style="left:2px;top:3px;" width="17" height="17"><use href="#appic"/></svg><div class="t" style="top:5px;font-size:12px;line-height:14px;color:#000;left:23px;">QuoteCAD Manufacturing 3.0</div><svg style="left:1798px;top:3px;" width="110" height="16" viewBox="0 0 110 16">
<path d="M1.500 7.500 H11.500" stroke="#111" stroke-width="1"/>
<path d="M46.500 4.500 H54.500 V12.500 H46.500 Z M48.500 4.500 V2.500 H56.500 V10.500 H54.500" fill="none" stroke="#111" stroke-width="1"/>
<path d="M92 2.500 L102.500 13 M102.500 2.500 L92 13" stroke="#111" stroke-width="1.100"/>
</svg><div style="left:0px;top:23px;width:1920px;height:58px;background:#f0f0f0;"></div><svg style="left:32px;top:28px;" width="34" height="32"><use href="#tbnew"/></svg><div class="t" style="left:-11.5px;width:120px;text-align:center;top:60px;font-size:12px;line-height:14px;">New...</div><svg style="left:101px;top:50px;" width="7" height="4"><use href="#darr"/></svg><svg style="left:142px;top:28px;" width="34" height="32"><use href="#tbopen"/></svg><div class="t" style="left:98px;width:120px;text-align:center;top:60px;font-size:12px;line-height:14px;">Open...</div><svg style="left:211px;top:50px;" width="7" height="4"><use href="#darr"/></svg><div style="left:222px;top:25px;width:1px;height:54px;background:#6e6e6e;"></div><svg style="left:265px;top:27px;" width="34" height="32"><use href="#tbmanu"/></svg><div class="t" style="left:220.5px;width:120px;text-align:center;top:60px;font-size:12px;line-height:14px;">Manufacturers</div><svg style="left:375px;top:25px;" width="34" height="34"><use href="#tbsupp"/></svg><div class="t" style="left:330px;width:120px;text-align:center;top:60px;font-size:12px;line-height:14px;">Suppliers</div><svg style="left:484.5px;top:27px;" width="34" height="32"><use href="#tbcust"/></svg><div class="t" style="left:440.5px;width:120px;text-align:center;top:60px;font-size:12px;line-height:14px;">Customers</div><div style="left:558px;top:25px;width:1px;height:54px;background:#6e6e6e;"></div><svg style="left:594px;top:26.5px;" width="34" height="34"><use href="#tbhelp"/></svg><div class="t" style="left:550px;width:120px;text-align:center;top:60px;font-size:12px;line-height:14px;">Help</div><svg style="left:663px;top:50px;" width="7" height="4"><use href="#darr"/></svg><div style="left:0px;top:81px;width:282px;height:934px;background:#808080;"></div><div style="left:282px;top:81px;width:5px;height:934px;background:#d4d4d4;"></div><div class="hdr" style="left:1px;top:81px;width:281px;height:25px;"></div><div class="t" style="top:88px;font-size:11px;line-height:13px;color:#000;left:4px;">Products Catalog</div><svg style="left:261px;top:85px;" width="16" height="16"><use href="#prod"/></svg><svg style="left:2px;top:109px;" width="17" height="17"><use href="#manu"/></svg><div class="t" style="top:112px;font-size:11px;line-height:13px;color:#f4f4f4;letter-spacing:-0.2px;left:25px;">Manufacturer</div><div class="combo" style="left:3px;top:128px;width:220px;height:21px;"></div><div class="t" style="top:133px;font-size:11px;line-height:13px;color:#000;letter-spacing:-0.2px;left:7px;">VHN</div><svg style="left:209px;top:136px;" width="10" height="6"><use href="#chev"/></svg><svg style="left:233px;top:133px;" width="14" height="14"><use href="#redx"/></svg><div style="left:254px;top:130px;width:1px;height:21px;background:#3c3c3c;"></div><svg style="left:261px;top:133px;" width="15" height="15"><use href="#gplus"/></svg><svg style="left:2px;top:164px;" width="16" height="17"><use href="#dbic"/></svg><div class="t" style="top:167px;font-size:11px;line-height:13px;color:#f4f4f4;letter-spacing:-0.2px;left:25px;">Database ID</div><div class="combo" style="left:3px;top:183px;width:220px;height:21px;"></div><div class="t" style="top:188px;font-size:11px;line-height:13px;color:#000;letter-spacing:-0.2px;left:7px;">Reels</div><svg style="left:209px;top:191px;" width="10" height="6"><use href="#chev"/></svg><svg style="left:233px;top:188px;" width="14" height="14"><use href="#redx"/></svg><div style="left:254px;top:185px;width:1px;height:21px;background:#3c3c3c;"></div><svg style="left:261px;top:188px;" width="15" height="15"><use href="#gplus"/></svg><svg style="left:2px;top:219px;" width="17" height="17"><use href="#plic"/></svg><div class="t" style="top:222px;font-size:11px;line-height:13px;color:#f4f4f4;letter-spacing:-0.2px;left:25px;">Product Line</div><div class="combo" style="left:3px;top:238px;width:220px;height:21px;"></div><div class="t" style="top:243px;font-size:11px;line-height:13px;color:#000;letter-spacing:-0.2px;left:7px;">Electric cable reels</div><svg style="left:209px;top:246px;" width="10" height="6"><use href="#chev"/></svg><svg style="left:233px;top:243px;" width="14" height="14"><use href="#redx"/></svg><div style="left:254px;top:240px;width:1px;height:21px;background:#3c3c3c;"></div><svg style="left:261px;top:243px;" width="15" height="15"><use href="#gplus"/></svg><div class="t" style="top:278px;font-size:11px;line-height:13px;color:#f4f4f4;letter-spacing:-0.2px;left:3px;">Product Line Organizer</div><svg style="left:3px;top:302px;" width="16" height="14"><use href="#org1"/></svg><div style="left:25px;top:298px;width:1px;height:20px;background:#3c3c3c;"></div><svg style="left:32px;top:302px;" width="16" height="16"><use href="#org2"/></svg><svg style="left:55px;top:302px;" width="16" height="16"><use href="#org3"/></svg><div style="left:77px;top:298px;width:1px;height:20px;background:#3c3c3c;"></div><svg style="left:87px;top:302px;" width="14" height="15"><use href="#org4"/></svg><div style="left:5px;top:323px;width:273px;height:637px;background:#fff;"></div><div style="left:27px;top:324px;width:28px;height:15px;background:#ececec;"></div><svg style="left:16px;top:324px;" width="12" height="50" viewBox="0 0 12 50"><path d="M1.500 7 V39 M2 6.500 H11 M2 22.500 H11 M2 38.500 H11" stroke="#8c8c8c" stroke-width="1" stroke-dasharray="1 1" fill="none"/></svg><div class="t" style="top:325px;font-size:11px;line-height:13px;color:#000;letter-spacing:-0.2px;left:29px;">4000</div><div class="t" style="top:341px;font-size:11px;line-height:13px;color:#000;letter-spacing:-0.2px;left:29px;">5000</div><div class="t" style="top:357px;font-size:11px;line-height:13px;color:#000;letter-spacing:-0.2px;left:29px;">9000</div><div class="hdr" style="left:1px;top:966px;width:281px;height:24px;"></div><div class="t" style="top:972px;font-size:11px;line-height:13px;color:#000;left:4px;">Parts Catalog</div><svg style="left:263px;top:971px;" width="15" height="13"><use href="#pcheck"/></svg><div class="hdr" style="left:1px;top:991px;width:281px;height:24px;"></div><div class="t" style="top:997px;font-size:11px;line-height:13px;color:#000;left:4px;">My Documents</div><svg style="left:261px;top:994px;" width="16" height="17"><use href="#mydocs"/></svg><div style="left:0px;top:1015px;width:1920px;height:25px;background:#f0f0f0;"></div><svg style="left:5px;top:1019px;" width="13" height="16"><use href="#stfolder"/></svg><div class="t" style="top:1021px;font-size:12px;line-height:14px;color:#000;letter-spacing:0.08px;left:21px;">C:\Users\Vitor\Documents\quotecad</div><div style="left:221px;top:1018px;width:1px;height:19px;background:#c0c0c0;"></div><div class="t" style="top:1021px;font-size:12px;line-height:14px;color:#000;left:226px;">Logged:  admin</div><div style="left:287px;top:81px;width:1030px;height:705px;background:#ababab;border:2px solid #808080;border-right:2px solid #fff;border-bottom:2px solid #fff;"></div><div style="left:289px;top:83px;width:1026px;height:701px;overflow:hidden;"><div class="win" style="left:402px;top:108px;width:593px;height:482px;background:#808080;border:1px solid #4a4a4a;border-radius:7px 7px 0 0;"><div style="left:0px;top:0px;width:591px;height:25px;background:linear-gradient(#f4f8fc 0,#bdcde0 1px,#c5d4e6 50%,#d4e3f3);"></div><div style="left:0px;top:0px;width:2px;height:480px;background:#dfeaf6;"></div><div style="left:589px;top:0px;width:2px;height:480px;background:#e9f0f8;"></div><div style="left:0px;top:478px;width:591px;height:2px;background:#e9f0f8;"></div><svg style="left:4px;top:6px;" width="16" height="16"><use href="#prod"/></svg><div class="t" style="top:7px;font-size:12px;line-height:14px;color:#000;letter-spacing:-0.4px;left:24px;">VHN9004</div><div style="left:555px;top:4px;width:32px;height:18px;background:linear-gradient(#c8d5e5,#c1cfe0 50%,#cddbea);border:1px solid #7c8fab;border-radius:3px;box-shadow:inset 0 0 0 1px rgba(225,235,246,0.7);"></div><svg style="left:565px;top:7px;" width="13" height="11" viewBox="0 0 13 11"><path d="M2.800 2.600 L10.200 8.400 M10.200 2.600 L2.800 8.400" stroke="#3a4466" stroke-width="4.200" stroke-linecap="round"/><path d="M2.800 2.600 L10.200 8.400 M10.200 2.600 L2.800 8.400" stroke="#f4f4f2" stroke-width="2.300" stroke-linecap="round"/></svg><div class="t" style="top:30px;font-size:12px;line-height:14px;color:#c9c4bc;left:17px;">Product</div><svg style="left:18px;top:53px;" width="16" height="16"><use href="#save"/></svg><svg style="left:41px;top:53px;" width="16" height="16"><use href="#savex"/></svg><div style="left:63px;top:51px;width:1px;height:21px;background:#3c3c3c;"></div><svg style="left:70px;top:54px;" width="16" height="14"><use href="#form1"/></svg><svg style="left:93px;top:52px;" width="16" height="16"><use href="#form2"/></svg><div style="left:115px;top:51px;width:1px;height:21px;background:#3c3c3c;"></div><svg style="left:119px;top:53px;" width="16" height="15"><use href="#suba"/></svg><div class="t" style="top:54px;font-size:12px;line-height:14px;color:#ececec;letter-spacing:-0.2px;left:138px;">Sub Assembly:</div><svg style="left:222px;top:53px;" width="15" height="15"><use href="#gcheck"/></svg><svg style="left:242px;top:59px;" width="7" height="4"><use href="#darr"/></svg><div class="t" style="top:80px;font-size:11px;line-height:13px;color:#f4f4f4;letter-spacing:-0.2px;left:17px;">Insertion Type:</div><div class="combo" style="left:14px;top:96px;width:181px;height:21px;"></div><div class="t" style="top:101px;font-size:11px;line-height:13px;color:#000;letter-spacing:-0.2px;left:18px;">Basic</div><svg style="left:181px;top:104px;" width="10" height="6"><use href="#chev"/></svg><div class="t" style="top:80px;font-size:11px;line-height:13px;color:#f4f4f4;letter-spacing:-0.2px;left:223px;">Group:</div><div style="left:223px;top:98px;width:353px;height:18px;background:#fff;"></div><div class="t" style="top:101px;font-size:11px;line-height:13px;color:#000;letter-spacing:-0.03px;left:226px;">VHN/Reels/Electric cable reels</div><div class="t" style="top:131px;font-size:11px;line-height:13px;color:#f4f4f4;letter-spacing:-0.2px;left:17px;">Description:</div><div style="left:15px;top:147px;width:561px;height:28px;background:#fff;"></div><div class="t" style="top:150px;font-size:11px;line-height:13px;color:#000;letter-spacing:-0.17px;left:17px;">VHN9004 , 3G1.5mm2, 9m cable reeling length. 500VAC. 1.4kW reeled (1.9kW unreeled) max. power.</div><div style="left:88px;top:193px;width:223px;height:20px;background:#f0f0f0;border:1px solid #d9d9d9;border-bottom:none;"></div><div style="left:166px;top:193px;width:1px;height:20px;background:#d9d9d9;"></div><div style="left:224px;top:193px;width:1px;height:20px;background:#d9d9d9;"></div><div style="left:14px;top:212px;width:563px;height:254px;background:#fff;border:1px solid #dcdcdc;border-right:2px solid #e4e4e4;"></div><div style="left:14px;top:191px;width:75px;height:23px;background:#fff;border:1px solid #dcdcdc;border-bottom:none;"></div><svg style="left:22px;top:193px;" width="16" height="16"><use href="#gen"/></svg><div class="t" style="top:196px;font-size:11px;line-height:13px;color:#000;letter-spacing:-0.2px;left:43px;">General</div><svg style="left:93px;top:195px;" width="17" height="16"><use href="#coins"/></svg><div class="t" style="top:198px;font-size:11px;line-height:13px;color:#000;letter-spacing:-0.2px;left:114px;">Quotation</div><svg style="left:173px;top:196px;" width="16" height="15"><use href="#parts"/></svg><div class="t" style="top:198px;font-size:11px;line-height:13px;color:#000;letter-spacing:-0.2px;left:195px;">Parts</div><svg style="left:231px;top:195px;" width="16" height="16"><use href="#docs"/></svg><div class="t" style="top:198px;font-size:11px;line-height:13px;color:#000;letter-spacing:-0.2px;left:253px;">Documents</div><svg style="left:26px;top:236px;" width="16" height="16"><use href="#bdir"/></svg><div class="t" style="top:238px;font-size:11px;line-height:13px;color:#000;letter-spacing:-0.2px;left:53px;">Blocks directory:</div><div class="combo" style="left:258px;top:231px;width:309px;height:21px;"></div><div class="t" style="top:236px;font-size:11px;line-height:13px;color:#000;letter-spacing:-0.2px;left:262px;">&lt;Default&gt;</div><svg style="left:552px;top:239px;" width="10" height="6"><use href="#chev"/></svg><div class="grp" style="left:25px;top:291px;width:160px;height:93px;"></div><div style="left:32px;top:285px;width:57px;height:13px;background:#fff;"></div><div class="t" style="top:286px;font-size:11px;line-height:13px;color:#000;letter-spacing:-0.35px;left:34px;">Dimensions</div><div class="grp" style="left:191px;top:291px;width:160px;height:93px;"></div><div style="left:198px;top:285px;width:61px;height:13px;background:#fff;"></div><div class="t" style="top:286px;font-size:11px;line-height:13px;color:#000;letter-spacing:-0.2px;left:200px;">Weight/Unit</div><div class="grp" style="left:357px;top:291px;width:210px;height:163px;"></div><div style="left:364px;top:285px;width:47px;height:13px;background:#fff;"></div><div class="t" style="top:286px;font-size:11px;line-height:13px;color:#000;letter-spacing:-0.2px;left:366px;">Previews</div><div class="grp" style="left:25px;top:392px;width:160px;height:62px;"></div><div style="left:32px;top:386px;width:31px;height:13px;background:#fff;"></div><div class="t" style="top:387px;font-size:11px;line-height:13px;color:#000;letter-spacing:-0.2px;left:34px;">Stock</div><div class="t" style="top:307px;font-size:11px;line-height:13px;color:#000;letter-spacing:-0.2px;left:-303px;width:400px;text-align:right;">Width:</div><div class="inp" style="left:108px;top:303px;width:71px;height:20px;"></div><div class="t" style="top:307px;font-size:11px;line-height:13px;color:#000;letter-spacing:-0.2px;left:-224px;width:400px;text-align:right;">0.310</div><div class="t" style="top:333px;font-size:11px;line-height:13px;color:#000;left:-303px;width:400px;text-align:right;">Length/Dept</div><div class="inp" style="left:108px;top:329px;width:71px;height:20px;"></div><div class="t" style="top:333px;font-size:11px;line-height:13px;color:#000;letter-spacing:-0.2px;left:-224px;width:400px;text-align:right;">0.360</div><div class="t" style="top:359px;font-size:11px;line-height:13px;color:#000;letter-spacing:-0.2px;left:-303px;width:400px;text-align:right;">Height:</div><div class="inp" style="left:108px;top:355px;width:71px;height:20px;"></div><div class="t" style="top:359px;font-size:11px;line-height:13px;color:#000;letter-spacing:-0.2px;left:-224px;width:400px;text-align:right;">0.190</div><div class="t" style="top:419px;font-size:11px;line-height:13px;color:#000;letter-spacing:-0.2px;left:-303px;width:400px;text-align:right;">Quantity:</div><div class="inp" style="left:108px;top:415px;width:71px;height:20px;"></div><div class="t" style="top:419px;font-size:11px;line-height:13px;color:#000;letter-spacing:-0.2px;left:-224px;width:400px;text-align:right;">1.000</div><div style="left:202px;top:306px;width:13px;height:13px;background:#fff;border:1px solid #333;"></div><div class="t" style="top:306px;font-size:11px;line-height:13px;color:#000;letter-spacing:-0.23px;left:221px;">Equals to the sum of the</div><div class="t" style="top:319px;font-size:11px;line-height:13px;color:#000;letter-spacing:-0.23px;left:220px;">weights of the Parts</div><div class="t" style="top:359px;font-size:11px;line-height:13px;color:#000;letter-spacing:-0.2px;left:-142px;width:400px;text-align:right;">Weight:</div><div class="inp" style="left:268px;top:355px;width:77px;height:20px;"></div><div class="t" style="top:359px;font-size:11px;line-height:13px;color:#000;letter-spacing:-0.2px;left:-58px;width:400px;text-align:right;">1.900</div><svg style="left:366px;top:305px;" width="17" height="16"><use href="#p2d"/></svg><svg style="left:387px;top:312px;" width="7" height="4"><use href="#darr"/></svg><svg style="left:398px;top:305px;" width="17" height="16"><use href="#p3d"/></svg><svg style="left:419px;top:312px;" width="7" height="4"><use href="#darr"/></svg><svg style="left:430px;top:307px;" width="16" height="12"><use href="#pimg"/></svg><svg style="left:451px;top:312px;" width="7" height="4"><use href="#darr"/></svg><div style="left:462px;top:303px;width:1px;height:22px;background:#6a6a6a;"></div><div style="left:364px;top:325px;width:197px;height:1px;background:#f0f0f0;"></div><div style="left:363px;top:331px;width:198px;height:118px;background:#fff;border:1px solid #444;"></div><svg style="left:363px;top:331px;" width="198" height="118"><use href="#reel2"/></svg><svg style="left:495px;top:419px;" width="21" height="28"><use href="#fileimg"/></svg></div><div class="win" style="left:67px;top:202px;width:593px;height:482px;background:#808080;border:1px solid #4a4a4a;border-radius:7px 7px 0 0;"><div style="left:0px;top:0px;width:591px;height:25px;background:linear-gradient(#f4f8fc 0,#bdcde0 1px,#c5d4e6 50%,#d4e3f3);"></div><div style="left:0px;top:0px;width:2px;height:480px;background:#dfeaf6;"></div><div style="left:589px;top:0px;width:2px;height:480px;background:#e9f0f8;"></div><div style="left:0px;top:478px;width:591px;height:2px;background:#e9f0f8;"></div><svg style="left:4px;top:6px;" width="16" height="16"><use href="#prod"/></svg><div class="t" style="top:7px;font-size:12px;line-height:14px;color:#000;letter-spacing:-0.4px;left:24px;">VHN4425</div><div style="left:555px;top:4px;width:32px;height:18px;background:linear-gradient(#c8d5e5,#c1cfe0 50%,#cddbea);border:1px solid #7c8fab;border-radius:3px;box-shadow:inset 0 0 0 1px rgba(225,235,246,0.7);"></div><svg style="left:565px;top:7px;" width="13" height="11" viewBox="0 0 13 11"><path d="M2.800 2.600 L10.200 8.400 M10.200 2.600 L2.800 8.400" stroke="#3a4466" stroke-width="4.200" stroke-linecap="round"/><path d="M2.800 2.600 L10.200 8.400 M10.200 2.600 L2.800 8.400" stroke="#f4f4f2" stroke-width="2.300" stroke-linecap="round"/></svg><div class="t" style="top:30px;font-size:12px;line-height:14px;color:#c9c4bc;left:17px;">Product</div><svg style="left:18px;top:53px;" width="16" height="16"><use href="#save"/></svg><svg style="left:41px;top:53px;" width="16" height="16"><use href="#savex"/></svg><div style="left:63px;top:51px;width:1px;height:21px;background:#3c3c3c;"></div><svg style="left:70px;top:54px;" width="16" height="14"><use href="#form1"/></svg><svg style="left:93px;top:52px;" width="16" height="16"><use href="#form2"/></svg><div style="left:115px;top:51px;width:1px;height:21px;background:#3c3c3c;"></div><svg style="left:119px;top:53px;" width="16" height="15"><use href="#suba"/></svg><div class="t" style="top:54px;font-size:12px;line-height:14px;color:#ececec;letter-spacing:-0.2px;left:138px;">Sub Assembly:</div><svg style="left:222px;top:53px;" width="15" height="15"><use href="#gcheck"/></svg><svg style="left:242px;top:59px;" width="7" height="4"><use href="#darr"/></svg><div class="t" style="top:80px;font-size:11px;line-height:13px;color:#f4f4f4;letter-spacing:-0.2px;left:17px;">Insertion Type:</div><div class="combo" style="left:14px;top:96px;width:181px;height:21px;"></div><div class="t" style="top:101px;font-size:11px;line-height:13px;color:#000;letter-spacing:-0.2px;left:18px;">Basic</div><svg style="left:181px;top:104px;" width="10" height="6"><use href="#chev"/></svg><div class="t" style="top:80px;font-size:11px;line-height:13px;color:#f4f4f4;letter-spacing:-0.2px;left:223px;">Group:</div><div style="left:223px;top:98px;width:353px;height:18px;background:#fff;"></div><div class="t" style="top:101px;font-size:11px;line-height:13px;color:#000;letter-spacing:-0.03px;left:226px;">VHN/Reels/Electric cable reels</div><div class="t" style="top:131px;font-size:11px;line-height:13px;color:#f4f4f4;letter-spacing:-0.2px;left:17px;">Description:</div><div style="left:15px;top:147px;width:561px;height:28px;background:#fff;"></div><div class="t" style="top:150px;font-size:11px;line-height:13px;color:#000;letter-spacing:-0.17px;left:17px;">VHN4425 , 4G2.5mm2, 8m cable reeling length. 500VAC. 1.4kW reeled (1.9kW unreeled) max. power.</div><div style="left:88px;top:193px;width:223px;height:20px;background:#f0f0f0;border:1px solid #d9d9d9;border-bottom:none;"></div><div style="left:166px;top:193px;width:1px;height:20px;background:#d9d9d9;"></div><div style="left:224px;top:193px;width:1px;height:20px;background:#d9d9d9;"></div><div style="left:14px;top:212px;width:563px;height:254px;background:#fff;border:1px solid #dcdcdc;border-right:2px solid #e4e4e4;"></div><div style="left:14px;top:191px;width:75px;height:23px;background:#fff;border:1px solid #dcdcdc;border-bottom:none;"></div><svg style="left:22px;top:193px;" width="16" height="16"><use href="#gen"/></svg><div class="t" style="top:196px;font-size:11px;line-height:13px;color:#000;letter-spacing:-0.2px;left:43px;">General</div><svg style="left:93px;top:195px;" width="17" height="16"><use href="#coins"/></svg><div class="t" style="top:198px;font-size:11px;line-height:13px;color:#000;letter-spacing:-0.2px;left:114px;">Quotation</div><svg style="left:173px;top:196px;" width="16" height="15"><use href="#parts"/></svg><div class="t" style="top:198px;font-size:11px;line-height:13px;color:#000;letter-spacing:-0.2px;left:195px;">Parts</div><svg style="left:231px;top:195px;" width="16" height="16"><use href="#docs"/></svg><div class="t" style="top:198px;font-size:11px;line-height:13px;color:#000;letter-spacing:-0.2px;left:253px;">Documents</div><svg style="left:26px;top:236px;" width="16" height="16"><use href="#bdir"/></svg><div class="t" style="top:238px;font-size:11px;line-height:13px;color:#000;letter-spacing:-0.2px;left:53px;">Blocks directory:</div><div class="combo" style="left:258px;top:231px;width:309px;height:21px;"></div><div class="t" style="top:236px;font-size:11px;line-height:13px;color:#000;letter-spacing:-0.2px;left:262px;">&lt;Default&gt;</div><svg style="left:552px;top:239px;" width="10" height="6"><use href="#chev"/></svg><div class="grp" style="left:25px;top:291px;width:160px;height:93px;"></div><div style="left:32px;top:285px;width:57px;height:13px;background:#fff;"></div><div class="t" style="top:286px;font-size:11px;line-height:13px;color:#000;letter-spacing:-0.35px;left:34px;">Dimensions</div><div class="grp" style="left:191px;top:291px;width:160px;height:93px;"></div><div style="left:198px;top:285px;width:61px;height:13px;background:#fff;"></div><div class="t" style="top:286px;font-size:11px;line-height:13px;color:#000;letter-spacing:-0.2px;left:200px;">Weight/Unit</div><div class="grp" style="left:357px;top:291px;width:210px;height:163px;"></div><div style="left:364px;top:285px;width:47px;height:13px;background:#fff;"></div><div class="t" style="top:286px;font-size:11px;line-height:13px;color:#000;letter-spacing:-0.2px;left:366px;">Previews</div><div class="grp" style="left:25px;top:392px;width:160px;height:62px;"></div><div style="left:32px;top:386px;width:31px;height:13px;background:#fff;"></div><div class="t" style="top:387px;font-size:11px;line-height:13px;color:#000;letter-spacing:-0.2px;left:34px;">Stock</div><div class="t" style="top:307px;font-size:11px;line-height:13px;color:#000;letter-spacing:-0.2px;left:-303px;width:400px;text-align:right;">Width:</div><div class="inp" style="left:108px;top:303px;width:71px;height:20px;"></div><div class="t" style="top:307px;font-size:11px;line-height:13px;color:#000;letter-spacing:-0.2px;left:-224px;width:400px;text-align:right;">0.310</div><div class="t" style="top:333px;font-size:11px;line-height:13px;color:#000;left:-303px;width:400px;text-align:right;">Length/Dept</div><div class="inp" style="left:108px;top:329px;width:71px;height:20px;"></div><div class="t" style="top:333px;font-size:11px;line-height:13px;color:#000;letter-spacing:-0.2px;left:-224px;width:400px;text-align:right;">0.360</div><div class="t" style="top:359px;font-size:11px;line-height:13px;color:#000;letter-spacing:-0.2px;left:-303px;width:400px;text-align:right;">Height:</div><div class="inp" style="left:108px;top:355px;width:71px;height:20px;"></div><div class="t" style="top:359px;font-size:11px;line-height:13px;color:#000;letter-spacing:-0.2px;left:-224px;width:400px;text-align:right;">0.190</div><div class="t" style="top:419px;font-size:11px;line-height:13px;color:#000;letter-spacing:-0.2px;left:-303px;width:400px;text-align:right;">Quantity:</div><div class="inp" style="left:108px;top:415px;width:71px;height:20px;"></div><div class="t" style="top:419px;font-size:11px;line-height:13px;color:#000;letter-spacing:-0.2px;left:-224px;width:400px;text-align:right;">2.000</div><div style="left:202px;top:306px;width:13px;height:13px;background:#fff;border:1px solid #333;"></div><div class="t" style="top:306px;font-size:11px;line-height:13px;color:#000;letter-spacing:-0.23px;left:221px;">Equals to the sum of the</div><div class="t" style="top:319px;font-size:11px;line-height:13px;color:#000;letter-spacing:-0.23px;left:220px;">weights of the Parts</div><div class="t" style="top:359px;font-size:11px;line-height:13px;color:#000;letter-spacing:-0.2px;left:-142px;width:400px;text-align:right;">Weight:</div><div class="inp" style="left:268px;top:355px;width:77px;height:20px;"></div><div class="t" style="top:359px;font-size:11px;line-height:13px;color:#000;letter-spacing:-0.2px;left:-58px;width:400px;text-align:right;">4.900</div><svg style="left:366px;top:305px;" width="17" height="16"><use href="#p2d"/></svg><svg style="left:387px;top:312px;" width="7" height="4"><use href="#darr"/></svg><svg style="left:398px;top:305px;" width="17" height="16"><use href="#p3d"/></svg><svg style="left:419px;top:312px;" width="7" height="4"><use href="#darr"/></svg><svg style="left:430px;top:307px;" width="16" height="12"><use href="#pimg"/></svg><svg style="left:451px;top:312px;" width="7" height="4"><use href="#darr"/></svg><div style="left:462px;top:303px;width:1px;height:22px;background:#6a6a6a;"></div><div style="left:364px;top:325px;width:197px;height:1px;background:#f0f0f0;"></div><div style="left:363px;top:331px;width:198px;height:118px;background:#fff;border:1px solid #444;"></div><svg style="left:387px;top:333px;" width="150" height="113"><use href="#reel"/></svg><svg style="left:510px;top:416px;" width="21" height="28"><use href="#fileimg"/></svg></div><div class="win" style="left:25px;top:14px;width:593px;height:482px;background:#808080;border:1px solid #000;border-radius:7px 7px 0 0;"><div style="left:0px;top:0px;width:591px;height:25px;background:linear-gradient(#dce8f5 0,#9db9da 1px,#a9c3e2 35%,#bfd5ec 85%,#cfe1f3);"></div><div style="left:0px;top:0px;width:2px;height:480px;background:#dfeaf6;"></div><div style="left:589px;top:0px;width:1px;height:480px;background:#dfeaf6;"></div><div style="left:590px;top:0px;width:1px;height:480px;background:#35c4f0;"></div><div style="left:0px;top:478px;width:591px;height:1px;background:#dfeaf6;"></div><div style="left:0px;top:479px;width:591px;height:1px;background:#35c4f0;"></div><svg style="left:4px;top:6px;" width="16" height="16"><use href="#prod"/></svg><div class="t" style="top:7px;font-size:12px;line-height:14px;color:#000;letter-spacing:-0.4px;left:24px;">VHN4415</div><div style="left:555px;top:4px;width:32px;height:18px;background:linear-gradient(#eaa79f,#dd8a80 47%,#c9452b 50%,#d9705a);border:1px solid #4a1a1a;border-radius:3px;box-shadow:inset 0 0 0 1px rgba(255,220,210,0.6);"></div><svg style="left:565px;top:7px;" width="13" height="11" viewBox="0 0 13 11"><path d="M2.800 2.600 L10.200 8.400 M10.200 2.600 L2.800 8.400" stroke="#3a3f5a" stroke-width="4.200" stroke-linecap="round"/><path d="M2.800 2.600 L10.200 8.400 M10.200 2.600 L2.800 8.400" stroke="#fff" stroke-width="2.300" stroke-linecap="round"/></svg><div class="t" style="top:30px;font-size:12px;line-height:14px;color:#c9c4bc;left:17px;">Product</div><svg style="left:18px;top:53px;" width="16" height="16"><use href="#save"/></svg><svg style="left:41px;top:53px;" width="16" height="16"><use href="#savex"/></svg><div style="left:63px;top:51px;width:1px;height:21px;background:#3c3c3c;"></div><svg style="left:70px;top:54px;" width="16" height="14"><use href="#form1"/></svg><svg style="left:93px;top:52px;" width="16" height="16"><use href="#form2"/></svg><div style="left:115px;top:51px;width:1px;height:21px;background:#3c3c3c;"></div><svg style="left:119px;top:53px;" width="16" height="15"><use href="#suba"/></svg><div class="t" style="top:54px;font-size:12px;line-height:14px;color:#ececec;letter-spacing:-0.2px;left:138px;">Sub Assembly:</div><svg style="left:222px;top:53px;" width="15" height="15"><use href="#gcheck"/></svg><svg style="left:242px;top:59px;" width="7" height="4"><use href="#darr"/></svg><div class="t" style="top:80px;font-size:11px;line-height:13px;color:#f4f4f4;letter-spacing:-0.2px;left:17px;">Insertion Type:</div><div class="combo" style="left:14px;top:96px;width:181px;height:21px;"></div><div class="t" style="top:101px;font-size:11px;line-height:13px;color:#000;letter-spacing:-0.2px;left:18px;">Basic</div><svg style="left:181px;top:104px;" width="10" height="6"><use href="#chev"/></svg><div class="t" style="top:80px;font-size:11px;line-height:13px;color:#f4f4f4;letter-spacing:-0.2px;left:223px;">Group:</div><div style="left:223px;top:98px;width:353px;height:18px;background:#fff;"></div><div class="t" style="top:101px;font-size:11px;line-height:13px;color:#000;letter-spacing:-0.03px;left:226px;">VHN/Reels/Electric cable reels</div><div class="t" style="top:131px;font-size:11px;line-height:13px;color:#f4f4f4;letter-spacing:-0.2px;left:17px;">Description:</div><div style="left:15px;top:147px;width:561px;height:28px;background:#fff;"></div><div class="t" style="top:150px;font-size:11px;line-height:13px;color:#000;letter-spacing:-0.17px;left:17px;">VHN4415 , 4G1.5mm2, 10m cable reeling length. 500VAC. 1.4kW reeled (1.9kW unreeled) max. power.</div><div style="left:88px;top:193px;width:223px;height:20px;background:#f0f0f0;border:1px solid #d9d9d9;border-bottom:none;"></div><div style="left:166px;top:193px;width:1px;height:20px;background:#d9d9d9;"></div><div style="left:224px;top:193px;width:1px;height:20px;background:#d9d9d9;"></div><div style="left:14px;top:212px;width:563px;height:254px;background:#fff;border:1px solid #dcdcdc;border-right:2px solid #e4e4e4;"></div><div style="left:14px;top:191px;width:75px;height:23px;background:#fff;border:1px solid #dcdcdc;border-bottom:none;"></div><svg style="left:22px;top:193px;" width="16" height="16"><use href="#gen"/></svg><div class="t" style="top:196px;font-size:11px;line-height:13px;color:#000;letter-spacing:-0.2px;left:43px;">General</div><svg style="left:93px;top:195px;" width="17" height="16"><use href="#coins"/></svg><div class="t" style="top:198px;font-size:11px;line-height:13px;color:#000;letter-spacing:-0.2px;left:114px;">Quotation</div><svg style="left:173px;top:196px;" width="16" height="15"><use href="#parts"/></svg><div class="t" style="top:198px;font-size:11px;line-height:13px;color:#000;letter-spacing:-0.2px;left:195px;">Parts</div><svg style="left:231px;top:195px;" width="16" height="16"><use href="#docs"/></svg><div class="t" style="top:198px;font-size:11px;line-height:13px;color:#000;letter-spacing:-0.2px;left:253px;">Documents</div><svg style="left:26px;top:236px;" width="16" height="16"><use href="#bdir"/></svg><div class="t" style="top:238px;font-size:11px;line-height:13px;color:#000;letter-spacing:-0.2px;left:53px;">Blocks directory:</div><div class="combo" style="left:258px;top:231px;width:309px;height:21px;"></div><div class="t" style="top:236px;font-size:11px;line-height:13px;color:#000;letter-spacing:-0.2px;left:262px;">&lt;Default&gt;</div><svg style="left:552px;top:239px;" width="10" height="6"><use href="#chev"/></svg><div class="grp" style="left:25px;top:291px;width:160px;height:93px;"></div><div style="left:32px;top:285px;width:57px;height:13px;background:#fff;"></div><div class="t" style="top:286px;font-size:11px;line-height:13px;color:#000;letter-spacing:-0.35px;left:34px;">Dimensions</div><div class="grp" style="left:191px;top:291px;width:160px;height:93px;"></div><div style="left:198px;top:285px;width:61px;height:13px;background:#fff;"></div><div class="t" style="top:286px;font-size:11px;line-height:13px;color:#000;letter-spacing:-0.2px;left:200px;">Weight/Unit</div><div class="grp" style="left:357px;top:291px;width:210px;height:163px;"></div><div style="left:364px;top:285px;width:47px;height:13px;background:#fff;"></div><div class="t" style="top:286px;font-size:11px;line-height:13px;color:#000;letter-spacing:-0.2px;left:366px;">Previews</div><div class="grp" style="left:25px;top:392px;width:160px;height:62px;"></div><div style="left:32px;top:386px;width:31px;height:13px;background:#fff;"></div><div class="t" style="top:387px;font-size:11px;line-height:13px;color:#000;letter-spacing:-0.2px;left:34px;">Stock</div><div class="t" style="top:307px;font-size:11px;line-height:13px;color:#000;letter-spacing:-0.2px;left:-303px;width:400px;text-align:right;">Width:</div><div class="inp" style="left:108px;top:303px;width:71px;height:20px;"></div><div class="t" style="top:307px;font-size:11px;line-height:13px;color:#000;letter-spacing:-0.2px;left:-224px;width:400px;text-align:right;">0.310</div><div class="t" style="top:333px;font-size:11px;line-height:13px;color:#000;left:-303px;width:400px;text-align:right;">Length/Dept</div><div class="inp" style="left:108px;top:329px;width:71px;height:20px;"></div><div class="t" style="top:333px;font-size:11px;line-height:13px;color:#000;letter-spacing:-0.2px;left:-224px;width:400px;text-align:right;">0.360</div><div class="t" style="top:359px;font-size:11px;line-height:13px;color:#000;letter-spacing:-0.2px;left:-303px;width:400px;text-align:right;">Height:</div><div class="inp" style="left:108px;top:355px;width:71px;height:20px;"></div><div class="t" style="top:359px;font-size:11px;line-height:13px;color:#000;letter-spacing:-0.2px;left:-224px;width:400px;text-align:right;">0.190</div><div class="t" style="top:419px;font-size:11px;line-height:13px;color:#000;letter-spacing:-0.2px;left:-303px;width:400px;text-align:right;">Quantity:</div><div class="inp" style="left:108px;top:415px;width:71px;height:20px;"></div><div class="t" style="top:419px;font-size:11px;line-height:13px;color:#000;letter-spacing:-0.2px;left:-224px;width:400px;text-align:right;">3.000</div><div style="left:202px;top:306px;width:13px;height:13px;background:#fff;border:1px solid #333;"></div><div class="t" style="top:306px;font-size:11px;line-height:13px;color:#000;letter-spacing:-0.23px;left:221px;">Equals to the sum of the</div><div class="t" style="top:319px;font-size:11px;line-height:13px;color:#000;letter-spacing:-0.23px;left:220px;">weights of the Parts</div><div class="t" style="top:359px;font-size:11px;line-height:13px;color:#000;letter-spacing:-0.2px;left:-142px;width:400px;text-align:right;">Weight:</div><div class="inp" style="left:268px;top:355px;width:77px;height:20px;"></div><div class="t" style="top:359px;font-size:11px;line-height:13px;color:#000;letter-spacing:-0.2px;left:-58px;width:400px;text-align:right;">4.600</div><svg style="left:366px;top:305px;" width="17" height="16"><use href="#p2d"/></svg><svg style="left:387px;top:312px;" width="7" height="4"><use href="#darr"/></svg><svg style="left:398px;top:305px;" width="17" height="16"><use href="#p3d"/></svg><svg style="left:419px;top:312px;" width="7" height="4"><use href="#darr"/></svg><svg style="left:430px;top:307px;" width="16" height="12"><use href="#pimg"/></svg><svg style="left:451px;top:312px;" width="7" height="4"><use href="#darr"/></svg><div style="left:462px;top:303px;width:1px;height:22px;background:#6a6a6a;"></div><div style="left:364px;top:325px;width:197px;height:1px;background:#f0f0f0;"></div><div style="left:363px;top:331px;width:198px;height:118px;background:#fff;border:1px solid #444;"></div><svg style="left:387px;top:333px;" width="150" height="113"><use href="#reel"/></svg><svg style="left:510px;top:416px;" width="21" height="28"><use href="#fileimg"/></svg></div></div><div style="left:287px;top:786px;width:1030px;height:22px;background:#808080;"></div><div class="t" style="top:791px;font-size:12px;line-height:14px;color:#000;letter-spacing:0.1px;left:291px;">Active Window</div><svg style="left:377px;top:791px;" width="16" height="16"><use href="#prod"/></svg><div class="t" style="top:791px;font-size:12px;line-height:14px;color:#000;letter-spacing:-0.6px;left:396px;">VHN4415</div><svg style="left:451px;top:797px;" width="6" height="3"><use href="#darr"/></svg><div style="left:1317px;top:81px;width:5px;height:727px;background:#d4d4d4;"></div><div style="left:287px;top:808px;width:1282px;height:5px;background:#d4d4d4;"></div><svg style="left:911px;top:809px;" width="36" height="3" viewBox="0 0 36 3"><path d="M0 0.500 H36" stroke="#2a3a7a" stroke-width="1" stroke-dasharray="1.500 2.500"/><path d="M1 1.500 H36" stroke="#fff" stroke-width="1" stroke-dasharray="1.500 2.500"/></svg><svg style="left:283px;top:528px;" width="3" height="36" viewBox="0 0 3 36"><path d="M0.500 0 V36" stroke="#2a3a7a" stroke-width="1" stroke-dasharray="1.500 2.500"/><path d="M1.500 1 V36" stroke="#fff" stroke-width="1" stroke-dasharray="1.500 2.500"/></svg><svg style="left:1318px;top:428px;" width="3" height="36" viewBox="0 0 3 36"><path d="M0.500 0 V36" stroke="#2a3a7a" stroke-width="1" stroke-dasharray="1.500 2.500"/><path d="M1.500 1 V36" stroke="#fff" stroke-width="1" stroke-dasharray="1.500 2.500"/></svg><svg style="left:1570px;top:528px;" width="3" height="36" viewBox="0 0 3 36"><path d="M0.500 0 V36" stroke="#2a3a7a" stroke-width="1" stroke-dasharray="1.500 2.500"/><path d="M1.500 1 V36" stroke="#fff" stroke-width="1" stroke-dasharray="1.500 2.500"/></svg><div style="left:287px;top:813px;width:1282px;height:202px;background:#808080;"></div><svg style="left:288px;top:817px;" width="16" height="16"><use href="#prod"/></svg><div class="t" style="top:819px;font-size:12px;line-height:14px;color:#fff;letter-spacing:0.95px;font-weight:bold;left:306px;">PRODUCTS</div><svg style="left:295px;top:841px;" width="16" height="13"><use href="#gfolder"/></svg><div style="left:318px;top:838px;width:1px;height:21px;background:#3c3c3c;"></div><svg style="left:325px;top:841px;" width="15" height="15"><use href="#gplus"/></svg><svg style="left:348px;top:841px;" width="14" height="14"><use href="#redx"/></svg><div style="left:370px;top:838px;width:1px;height:21px;background:#3c3c3c;"></div><svg style="left:377px;top:840px;" width="16" height="16"><use href="#mag"/></svg><svg style="left:400px;top:840px;" width="15" height="16"><use href="#funnel"/></svg><div style="left:422px;top:838px;width:1px;height:21px;background:#3c3c3c;"></div><div style="left:293px;top:859px;width:1050px;height:133px;background:#fff;"></div><svg style="left:299px;top:866px;" width="16" height="14"><use href="#barcode"/></svg><div class="t" style="top:867px;font-size:11px;line-height:13px;color:#000;letter-spacing:-0.2px;left:327px;">Product</div><svg style="left:385px;top:867px;" width="14" height="12"><use href="#tag"/></svg><div class="t" style="top:867px;font-size:11px;line-height:13px;color:#000;letter-spacing:-0.2px;left:411px;">Description</div><svg style="left:877px;top:866px;" width="16" height="15"><use href="#parts"/></svg><svg style="left:917px;top:866px;" width="16" height="15"><use href="#suba"/></svg><div class="t" style="top:867px;font-size:11px;line-height:13px;color:#000;letter-spacing:-0.2px;left:604px;width:400px;text-align:right;">Stock</div><svg style="left:1025px;top:865px;" width="17" height="16"><use href="#coins"/></svg><div class="t" style="top:867px;font-size:11px;line-height:13px;color:#000;letter-spacing:-0.2px;left:705px;width:400px;text-align:right;">Base Price</div><div style="left:375px;top:861px;width:1px;height:23px;background:#e5e5e5;"></div><div style="left:870px;top:861px;width:1px;height:23px;background:#e5e5e5;"></div><div style="left:910px;top:861px;width:1px;height:23px;background:#e5e5e5;"></div><div style="left:950px;top:861px;width:1px;height:23px;background:#e5e5e5;"></div><div style="left:1010px;top:861px;width:1px;height:23px;background:#e5e5e5;"></div><div style="left:1110px;top:861px;width:1px;height:23px;background:#e5e5e5;"></div><div style="left:313px;top:902px;width:798px;height:17px;background:#f0f0f0;"></div><svg style="left:297px;top:888px;" width="16" height="13"><use href="#bfolder"/></svg><div class="t" style="top:888px;font-size:11px;line-height:13px;color:#000;letter-spacing:-0.2px;left:315px;">VHN4415</div><div class="t" style="top:888px;font-size:11px;line-height:13px;color:#000;letter-spacing:-0.17px;left:383px;">VHN4415 , 4G1.5mm2, 10m cable reeling length. 500VAC. 1.4kW reeled (1.9kW unreeled) max. po...</div><svg style="left:297px;top:905px;" width="16" height="13"><use href="#bfolder"/></svg><div class="t" style="top:905px;font-size:11px;line-height:13px;color:#000;letter-spacing:-0.2px;left:315px;">VHN4425</div><div class="t" style="top:905px;font-size:11px;line-height:13px;color:#000;letter-spacing:-0.17px;left:383px;">VHN4425 , 4G2.5mm2, 8m cable reeling length. 500VAC. 1.4kW reeled (1.9kW unreeled) max. power.</div><div class="t" style="top:888px;font-size:11px;line-height:13px;color:#000;letter-spacing:-0.2px;left:884px;">No</div><div class="t" style="top:888px;font-size:11px;line-height:13px;color:#000;letter-spacing:-0.2px;left:922px;">Yes</div><div class="t" style="top:888px;font-size:11px;line-height:13px;color:#000;letter-spacing:-0.2px;left:605px;width:400px;text-align:right;">3.000</div><div class="t" style="top:888px;font-size:11px;line-height:13px;color:#000;letter-spacing:-0.2px;left:705px;width:400px;text-align:right;">128.00</div><div class="t" style="top:905px;font-size:11px;line-height:13px;color:#000;letter-spacing:-0.2px;left:884px;">No</div><div class="t" style="top:905px;font-size:11px;line-height:13px;color:#000;letter-spacing:-0.2px;left:922px;">Yes</div><div class="t" style="top:905px;font-size:11px;line-height:13px;color:#000;letter-spacing:-0.2px;left:605px;width:400px;text-align:right;">2.000</div><div class="t" style="top:905px;font-size:11px;line-height:13px;color:#000;letter-spacing:-0.2px;left:705px;width:400px;text-align:right;">133.00</div><div class="t" style="top:997px;font-size:12px;line-height:14px;color:#b4b4b4;letter-spacing:-0.15px;left:297px;">Catalog:   VHN\Reels\Electric cable reels\4000</div><div style="left:541px;top:994px;width:1.5px;height:18px;background:#e8e8e8;"></div><div class="t" style="top:997px;font-size:12px;line-height:14px;color:#b4b4b4;left:546px;">Products:  2</div><div style="left:615px;top:994px;width:1.5px;height:18px;background:#e8e8e8;"></div><div class="t" style="top:997px;font-size:13px;line-height:15px;color:#cecece;letter-spacing:0.3px;font-weight:bold;left:620px;">Selected:  VHN4425</div><div style="left:1355px;top:846px;width:210px;height:165px;border:1px solid #e0e0e0;"></div><div style="left:1362px;top:840px;width:41px;height:13px;background:#808080;"></div><div class="t" style="top:841px;font-size:11px;line-height:13px;color:#f4f4f4;letter-spacing:-0.2px;left:1364px;">Preview</div><svg style="left:1364px;top:859px;" width="17" height="16"><use href="#p2dw"/></svg><svg style="left:1385px;top:866px;" width="7" height="4"><use href="#darr"/></svg><svg style="left:1396px;top:859px;" width="17" height="16"><use href="#p3dw"/></svg><svg style="left:1417px;top:866px;" width="7" height="4"><use href="#darr"/></svg><svg style="left:1428px;top:862px;" width="16" height="12"><use href="#pimg"/></svg><svg style="left:1449px;top:866px;" width="7" height="4"><use href="#darr"/></svg><div style="left:1460px;top:858px;width:1px;height:21px;background:#3c3c3c;"></div><div style="left:1361px;top:886px;width:198px;height:118px;background:#fff;"></div><svg style="left:1385px;top:888px;" width="150" height="113"><use href="#reel"/></svg><svg style="left:1508px;top:971px;" width="21" height="28"><use href="#fileimg"/></svg><div style="left:1322px;top:81px;width:247px;height:727px;background:#808080;"></div><div class="hdr" style="left:1322px;top:81px;width:247px;height:25px;"></div><div class="t" style="top:88px;font-size:11px;line-height:13px;color:#000;letter-spacing:0.08px;left:1325px;">Product Line Files</div><svg style="left:1548px;top:85px;" width="16" height="16"><use href="#bdir"/></svg><svg style="left:1326px;top:111px;" width="16" height="15"><use href="#foldplus"/></svg><svg style="left:1351px;top:110px;" width="14" height="16"><use href="#graydoc"/></svg><div style="left:1370px;top:108px;width:1px;height:21px;background:#3c3c3c;"></div><svg style="left:1379px;top:110px;" width="15" height="16"><use href="#copyic"/></svg><div style="left:1399px;top:108px;width:1px;height:21px;background:#3c3c3c;"></div><svg style="left:1407px;top:111px;" width="14" height="14"><use href="#redx"/></svg><svg style="left:1430px;top:111px;" width="15" height="15"><use href="#dashrect"/></svg><div style="left:1328px;top:135px;width:235px;height:522px;background:#fff;"></div><svg style="left:0;top:0" width="1920" height="320"><path d="M1339.500 148 V304 M1340 303.500 H1350 M1344 143.500 H1351 M1344 159.500 H1351 M1344 175.500 H1350
M1358.500 184 V288 M1359 287.500 H1368 M1359 255.500 H1368 M1359 271.500 H1368 M1363 191.500 H1369
M1377.500 200 V240 M1378 239.500 H1387 M1378 207.500 H1387 M1378 223.500 H1387" stroke="#8c8c8c" stroke-width="1" stroke-dasharray="1 1" fill="none"/></svg><svg style="left:1335px;top:139px;" width="9" height="9"><use href="#plusbox"/></svg><svg style="left:1335px;top:155px;" width="9" height="9"><use href="#plusbox"/></svg><svg style="left:1335px;top:171px;" width="9" height="9"><use href="#minusbox"/></svg><svg style="left:1354px;top:187px;" width="9" height="9"><use href="#minusbox"/></svg><svg style="left:1351px;top:135px;" width="16" height="16"><use href="#fold2d"/></svg><div class="t" style="top:137px;font-size:11px;line-height:13px;color:#000;letter-spacing:-0.2px;left:1371px;">2D</div><svg style="left:1351px;top:151px;" width="16" height="16"><use href="#fold3d"/></svg><div class="t" style="top:153px;font-size:11px;line-height:13px;color:#000;letter-spacing:-0.2px;left:1371px;">3D</div><svg style="left:1350px;top:167px;" width="16" height="16"><use href="#foldimg"/></svg><div class="t" style="top:169px;font-size:11px;line-height:13px;color:#000;letter-spacing:-0.2px;left:1370px;">img</div><svg style="left:1370px;top:183px;" width="16" height="16"><use href="#bdir"/></svg><div class="t" style="top:185px;font-size:11px;line-height:13px;color:#000;letter-spacing:-0.2px;left:1389px;">reels</div><svg style="left:1388px;top:201px;" width="16" height="12"><use href="#thumb"/></svg><div class="t" style="top:201px;font-size:11px;line-height:13px;color:#000;letter-spacing:-0.2px;left:1409px;">1400.jpg</div><svg style="left:1388px;top:217px;" width="16" height="12"><use href="#thumb"/></svg><div class="t" style="top:217px;font-size:11px;line-height:13px;color:#000;letter-spacing:-0.2px;left:1409px;">1700.jpg</div><svg style="left:1388px;top:233px;" width="16" height="12"><use href="#thumb"/></svg><div class="t" style="top:233px;font-size:11px;line-height:13px;color:#000;letter-spacing:-0.2px;left:1409px;">9000.jpg</div><div style="left:1388px;top:247px;width:68px;height:16px;background:#ececec;"></div><svg style="left:1369px;top:249px;" width="16" height="12"><use href="#thumbc"/></svg><div class="t" style="top:249px;font-size:11px;line-height:13px;color:#000;letter-spacing:-0.2px;left:1390px;">VHN4415.jpg</div><svg style="left:1369px;top:265px;" width="16" height="12"><use href="#thumb"/></svg><div class="t" style="top:265px;font-size:11px;line-height:13px;color:#000;letter-spacing:-0.2px;left:1390px;">VHN4425.jpg</div><svg style="left:1369px;top:281px;" width="16" height="12"><use href="#thumb"/></svg><div class="t" style="top:281px;font-size:11px;line-height:13px;color:#000;letter-spacing:-0.2px;left:1390px;">VHN9004.jpg</div><svg style="left:1350px;top:295px;" width="16" height="16"><use href="#foldviews"/></svg><div class="t" style="top:297px;font-size:11px;line-height:13px;color:#000;letter-spacing:-0.2px;left:1371px;">views</div><svg style="left:1331px;top:669px;" width="11" height="14"><use href="#fileblue"/></svg><div class="t" style="top:669px;font-size:12px;line-height:14px;color:#d4d4d4;letter-spacing:0.15px;font-weight:bold;left:1352px;">VHN4415.jpg</div><div style="left:1327px;top:693px;width:237px;height:110px;background:#fff;"></div><svg style="left:1372px;top:693px;" width="146" height="110"><use href="#reel"/></svg><div style="left:1569px;top:81px;width:5px;height:934px;background:#d4d4d4;"></div><div style="left:1574px;top:81px;width:346px;height:934px;background:#c0c0c0;"></div><div class="hdr" style="left:1574px;top:81px;width:346px;height:25px;"></div><div class="t" style="top:88px;font-size:11px;line-height:13px;color:#000;letter-spacing:0.05px;left:1577px;">General Properties</div><svg style="left:1900px;top:85px;" width="13" height="16"><use href="#gpdoc"/></svg><div style="left:1576px;top:108px;width:23px;height:23px;background:#b5d3f2;border:1px solid #6aa2e0;"></div><svg style="left:1579px;top:111px;" width="16" height="16"><use href="#pgcat"/></svg><svg style="left:1601px;top:110px;" width="20" height="19" viewBox="0 0 20 19"><path d="M15.500 1 V16 M12.500 12.500 L15.500 17 L18.500 12.500 Z" stroke="#000" fill="#000" stroke-width="1"/></svg><div class="t" style="left:1602px;top:109px;font-family:'Liberation Serif',serif;font-size:10px;line-height:10px;color:#2a4fb0;">A</div><div class="t" style="left:1602px;top:118px;font-family:'Liberation Serif',serif;font-size:10px;line-height:10px;color:#a03030;">Z</div><div style="left:1624px;top:109px;width:1px;height:22px;background:#6e6e6e;"></div><svg style="left:1631px;top:113px;" width="16" height="13"><use href="#pgprop"/></svg><div style="left:1574px;top:133px;width:346px;height:819px;background:#fff;border:1px solid #b0b0b0;border-right:none;border-top-color:#e4e4e4;"></div><div style="left:1575px;top:134px;width:14px;height:352px;background:#cfcfcf;"></div><div style="left:1576px;top:134px;width:344px;height:352px;overflow:hidden;"><div style="left:-1px;top:0px;width:345px;height:16px;background:#cfcfcf;"></div><div class="t" style="top:2px;font-size:11px;line-height:13px;color:#000;letter-spacing:0.32px;font-weight:bold;left:17px;">General Configurations</div><svg style="left:1px;top:3px;" width="9" height="9"><use href="#pgminus"/></svg><div style="left:13px;top:31px;width:331px;height:1px;background:#d4d4d4;"></div><div style="left:162px;top:16px;width:1px;height:16px;background:#d4d4d4;"></div><div class="t" style="top:18px;font-size:11px;line-height:13px;color:#000;letter-spacing:-0.2px;left:17px;">My Company</div><div class="t" style="top:18px;font-size:11px;line-height:13px;color:#000;letter-spacing:0.52px;font-weight:bold;left:166px;">CAD-MANUFACTURING SOLUTION</div><svg style="left:1px;top:19px;" width="9" height="9"><use href="#pgminus"/></svg><div style="left:13px;top:47px;width:331px;height:1px;background:#d4d4d4;"></div><div style="left:162px;top:32px;width:1px;height:16px;background:#d4d4d4;"></div><div class="t" style="top:34px;font-size:11px;line-height:13px;color:#6d6d6d;letter-spacing:-0.2px;left:31px;">Name</div><div class="t" style="top:34px;font-size:11px;line-height:13px;color:#6d6d6d;letter-spacing:-0.2px;left:166px;">CAD-MANUFACTURING SOLUTION</div><div style="left:13px;top:63px;width:331px;height:1px;background:#d4d4d4;"></div><div style="left:162px;top:48px;width:1px;height:16px;background:#d4d4d4;"></div><div class="t" style="top:50px;font-size:11px;line-height:13px;color:#6d6d6d;letter-spacing:-0.2px;left:31px;">Contact</div><div class="t" style="top:50px;font-size:11px;line-height:13px;color:#6d6d6d;letter-spacing:-0.2px;left:166px;">Vitor Neves</div><div style="left:13px;top:79px;width:331px;height:1px;background:#d4d4d4;"></div><div style="left:162px;top:64px;width:1px;height:16px;background:#d4d4d4;"></div><div class="t" style="top:66px;font-size:11px;line-height:13px;color:#6d6d6d;letter-spacing:-0.2px;left:31px;">Address</div><div class="t" style="top:66px;font-size:11px;line-height:13px;color:#6d6d6d;letter-spacing:-0.2px;left:166px;">PO BOX 1735</div><div style="left:13px;top:95px;width:331px;height:1px;background:#d4d4d4;"></div><div style="left:162px;top:80px;width:1px;height:16px;background:#d4d4d4;"></div><div class="t" style="top:82px;font-size:11px;line-height:13px;color:#6d6d6d;letter-spacing:-0.2px;left:31px;">ZIP</div><div class="t" style="top:82px;font-size:11px;line-height:13px;color:#6d6d6d;letter-spacing:-0.2px;left:166px;">96067</div><div style="left:13px;top:111px;width:331px;height:1px;background:#d4d4d4;"></div><div style="left:162px;top:96px;width:1px;height:16px;background:#d4d4d4;"></div><div class="t" style="top:98px;font-size:11px;line-height:13px;color:#6d6d6d;letter-spacing:-0.2px;left:31px;">City</div><div class="t" style="top:98px;font-size:11px;line-height:13px;color:#6d6d6d;letter-spacing:-0.2px;left:166px;">Burleson</div><div style="left:13px;top:127px;width:331px;height:1px;background:#d4d4d4;"></div><div style="left:162px;top:112px;width:1px;height:16px;background:#d4d4d4;"></div><div class="t" style="top:114px;font-size:11px;line-height:13px;color:#6d6d6d;letter-spacing:-0.2px;left:31px;">State</div><div class="t" style="top:114px;font-size:11px;line-height:13px;color:#6d6d6d;letter-spacing:-0.2px;left:166px;">TX</div><div style="left:13px;top:143px;width:331px;height:1px;background:#d4d4d4;"></div><div style="left:162px;top:128px;width:1px;height:16px;background:#d4d4d4;"></div><div class="t" style="top:130px;font-size:11px;line-height:13px;color:#6d6d6d;letter-spacing:-0.2px;left:31px;">Country</div><div class="t" style="top:130px;font-size:11px;line-height:13px;color:#6d6d6d;letter-spacing:-0.2px;left:166px;">United Stats</div><div style="left:13px;top:159px;width:331px;height:1px;background:#d4d4d4;"></div><div style="left:162px;top:144px;width:1px;height:16px;background:#d4d4d4;"></div><div class="t" style="top:146px;font-size:11px;line-height:13px;color:#6d6d6d;letter-spacing:-0.2px;left:31px;">Phone</div><div class="t" style="top:146px;font-size:11px;line-height:13px;color:#6d6d6d;letter-spacing:-0.2px;left:166px;">+1 (501) 588-7970</div><div style="left:13px;top:175px;width:331px;height:1px;background:#d4d4d4;"></div><div style="left:162px;top:160px;width:1px;height:16px;background:#d4d4d4;"></div><div class="t" style="top:162px;font-size:11px;line-height:13px;color:#6d6d6d;letter-spacing:-0.2px;left:31px;">FAX</div><div class="t" style="top:162px;font-size:11px;line-height:13px;color:#6d6d6d;letter-spacing:-0.2px;left:166px;">+1 (866) 646-0172</div><div style="left:13px;top:191px;width:331px;height:1px;background:#d4d4d4;"></div><div style="left:162px;top:176px;width:1px;height:16px;background:#d4d4d4;"></div><div class="t" style="top:178px;font-size:11px;line-height:13px;color:#6d6d6d;letter-spacing:-0.2px;left:31px;">E-mail</div><div class="t" style="top:178px;font-size:11px;line-height:13px;color:#6d6d6d;letter-spacing:-0.2px;left:166px;">info@quotecad.com</div><div style="left:13px;top:207px;width:331px;height:1px;background:#d4d4d4;"></div><div style="left:162px;top:192px;width:1px;height:16px;background:#d4d4d4;"></div><div class="t" style="top:194px;font-size:11px;line-height:13px;color:#6d6d6d;letter-spacing:-0.2px;left:31px;">Website</div><div class="t" style="top:194px;font-size:11px;line-height:13px;color:#6d6d6d;letter-spacing:-0.2px;left:166px;">www.quotecad.com</div><div style="left:13px;top:223px;width:331px;height:1px;background:#d4d4d4;"></div><div style="left:162px;top:208px;width:1px;height:16px;background:#d4d4d4;"></div><div class="t" style="top:210px;font-size:11px;line-height:13px;color:#000;letter-spacing:-0.2px;left:17px;">Working Directory</div><div class="t" style="top:210px;font-size:11px;line-height:13px;color:#000;letter-spacing:0.05px;left:166px;">C:\Users\Vitor\Documents\quotecad</div><div style="left:13px;top:239px;width:331px;height:1px;background:#d4d4d4;"></div><div style="left:162px;top:224px;width:1px;height:16px;background:#d4d4d4;"></div><div class="t" style="top:226px;font-size:11px;line-height:13px;color:#000;letter-spacing:-0.2px;left:17px;">Users</div><div class="t" style="top:226px;font-size:11px;line-height:13px;color:#000;letter-spacing:-0.2px;left:166px;">(...), 2 User(s)</div><div style="left:13px;top:255px;width:331px;height:1px;background:#d4d4d4;"></div><div style="left:162px;top:240px;width:1px;height:16px;background:#d4d4d4;"></div><div class="t" style="top:242px;font-size:11px;line-height:13px;color:#000;letter-spacing:-0.2px;left:17px;">Reports</div><div class="t" style="top:242px;font-size:11px;line-height:13px;color:#000;letter-spacing:0.52px;font-weight:bold;left:166px;">(...)</div><svg style="left:1px;top:243px;" width="9" height="9"><use href="#pgplus"/></svg><div style="left:13px;top:271px;width:331px;height:1px;background:#d4d4d4;"></div><div style="left:162px;top:256px;width:1px;height:16px;background:#d4d4d4;"></div><div class="t" style="top:258px;font-size:11px;line-height:13px;color:#000;letter-spacing:-0.2px;left:17px;">Language</div><div class="t" style="top:258px;font-size:11px;line-height:13px;color:#000;letter-spacing:-0.2px;left:166px;">English (United States)</div><div style="left:-1px;top:272px;width:345px;height:16px;background:#cfcfcf;"></div><div class="t" style="top:274px;font-size:11px;line-height:13px;color:#000;letter-spacing:0.32px;font-weight:bold;left:17px;">Quotation</div><svg style="left:1px;top:275px;" width="9" height="9"><use href="#pgminus"/></svg><div style="left:13px;top:303px;width:331px;height:1px;background:#d4d4d4;"></div><div style="left:162px;top:288px;width:1px;height:16px;background:#d4d4d4;"></div><div class="t" style="top:290px;font-size:11px;line-height:13px;color:#000;letter-spacing:-0.2px;left:17px;">Quote Prices</div><div class="t" style="top:290px;font-size:11px;line-height:13px;color:#000;letter-spacing:-0.2px;left:166px;">(...), 1 Active</div><div style="left:13px;top:304px;width:149px;height:15px;background:#cfcfcf;"></div><div style="left:13px;top:319px;width:331px;height:1px;background:#d4d4d4;"></div><div style="left:162px;top:304px;width:1px;height:16px;background:#d4d4d4;"></div><div class="t" style="top:306px;font-size:11px;line-height:13px;color:#000;letter-spacing:-0.2px;left:17px;">Prices Formulas</div><div class="t" style="top:306px;font-size:11px;line-height:13px;color:#000;letter-spacing:-0.2px;left:166px;">(...), 2</div><div style="left:13px;top:335px;width:331px;height:1px;background:#d4d4d4;"></div><div style="left:162px;top:320px;width:1px;height:16px;background:#d4d4d4;"></div><div class="t" style="top:322px;font-size:11px;line-height:13px;color:#000;letter-spacing:-0.2px;left:17px;">Additional Product Items</div><div class="t" style="top:322px;font-size:11px;line-height:13px;color:#000;letter-spacing:-0.2px;left:166px;">(...), 0 Item(s)</div><div style="left:13px;top:351px;width:331px;height:1px;background:#d4d4d4;"></div><div style="left:162px;top:336px;width:1px;height:16px;background:#d4d4d4;"></div><div class="t" style="top:338px;font-size:11px;line-height:13px;color:#000;letter-spacing:-0.2px;left:17px;">Additional Quote Items</div><div class="t" style="top:338px;font-size:11px;line-height:13px;color:#000;letter-spacing:-0.2px;left:166px;">(...), 1 Item(s)</div></div><div style="left:1575px;top:957px;width:345px;height:57px;background:#f0f0f0;border:1px solid #a0a0a0;border-right:none;"></div><div class="t" style="top:960px;font-size:11px;line-height:13px;color:#333;letter-spacing:0.19px;font-weight:bold;left:1580px;">Prices Formulas</div><div class="t" style="top:975px;font-size:11px;line-height:13px;color:#444;letter-spacing:-0.16px;left:1580px;">Formulas that can be associated to each price in a Product with the</div><div class="t" style="top:988px;font-size:11px;line-height:13px;color:#444;letter-spacing:-0.18px;left:1579px;">purpose of automating the prices calculation. This property allows yo...</div>
</body></html>
